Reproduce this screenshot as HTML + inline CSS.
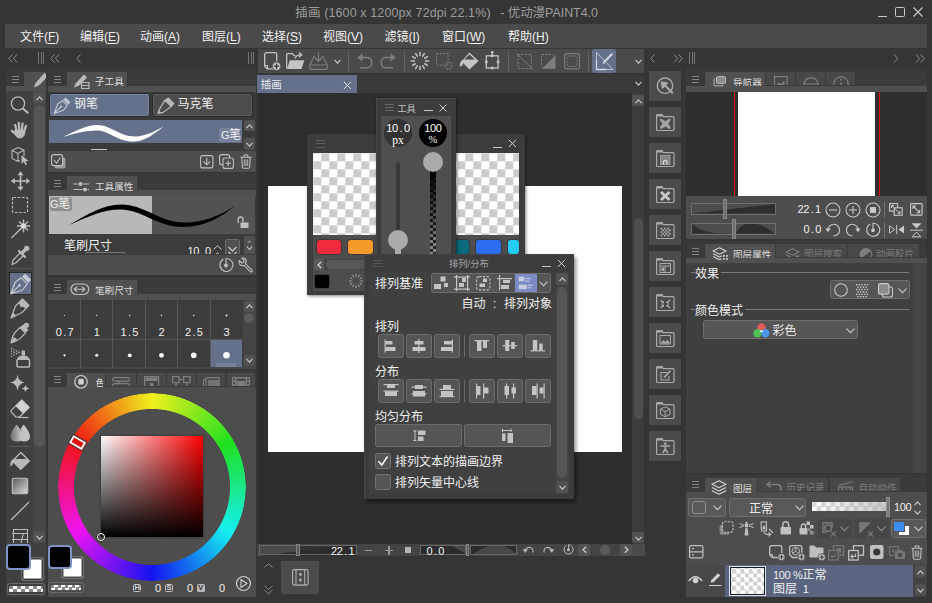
<!DOCTYPE html>
<html lang="zh-CN"><head><meta charset="utf-8"><title>插画 - 优动漫PAINT4.0</title>
<style>
html,body{margin:0;padding:0}
body{width:932px;height:603px;overflow:hidden;background:#353535;position:relative;font-family:"Liberation Sans","Noto Sans CJK SC",sans-serif;font-size:12px}
div,svg{position:absolute}
svg{overflow:visible}
.t{white-space:nowrap;line-height:1.15}
.m{font-family:"Liberation Sans","Noto Sans CJK SC",sans-serif;font-size:11px!important;letter-spacing:-0.350px}
.m i,i.m{font-style:normal;display:inline-block;width:6px;text-align:center}
.s{font-family:"Liberation Serif","Noto Serif CJK SC",serif}
u{text-decoration:underline;text-underline-offset:1.500px;text-decoration-thickness:1px}
</style></head>
<body>
<div class="t" style="left:295.3px;top:5.8px;font-size:12.5px;color:#9c9c9c;letter-spacing:0.120px;">插画 (1600 x 1200px 72dpi 22.1%)</div>
<div class="t" style="left:500.2px;top:5.8px;font-size:12.5px;color:#9c9c9c;letter-spacing:-0.050px;">- 优动漫PAINT4.0</div>
<div style="left:877.5px;top:16px;width:9.5px;height:1.2px;background:#c8c8c8;"></div>
<div style="left:895.3px;top:7.3px;width:9.7px;height:9.5px;border:1.200px solid #c8c8c8;box-sizing:border-box;border-radius:1.500px;"></div>
<svg style="left:912px;top:6px;" width="12" height="12" viewBox="0 0 12 12" fill="none" stroke="#b9b9b9" stroke-width="1"><path d="M1.5 1.5 L10.5 10.5 M10.5 1.5 L1.5 10.5" stroke="#c8c8c8" stroke-width="1.2"/></svg>
<div style="left:5px;top:24px;width:922px;height:24px;background:#4a4a4a;"></div>
<div class="t" style="left:20px;top:31px;font-size:12px;color:#f0f0f0;">文件(<u>F</u>)</div>
<div class="t" style="left:80px;top:31px;font-size:12px;color:#f0f0f0;">编辑(<u>E</u>)</div>
<div class="t" style="left:140px;top:31px;font-size:12px;color:#f0f0f0;">动画(<u>A</u>)</div>
<div class="t" style="left:202px;top:31px;font-size:12px;color:#f0f0f0;">图层(<u>L</u>)</div>
<div class="t" style="left:262px;top:31px;font-size:12px;color:#f0f0f0;">选择(<u>S</u>)</div>
<div class="t" style="left:323px;top:31px;font-size:12px;color:#f0f0f0;">视图(<u>V</u>)</div>
<div class="t" style="left:384.5px;top:31px;font-size:12px;color:#f0f0f0;">滤镜(<u>I</u>)</div>
<div class="t" style="left:442px;top:31px;font-size:12px;color:#f0f0f0;">窗口(<u>W</u>)</div>
<div class="t" style="left:508px;top:31px;font-size:12px;color:#f0f0f0;">帮助(<u>H</u>)</div>
<svg style="left:8px;top:54px;" width="10" height="9" viewBox="0 0 10 9" fill="none" stroke="#b9b9b9" stroke-width="1"><path d="M4.5 0.5 L0.8 4.5 L4.5 8.5 M9 0.5 L5.3 4.5 L9 8.5" stroke="#8a8a8a" stroke-width="1"/></svg>
<div style="left:38.0px;top:52px;width:1px;height:12px;background:#747474;"></div>
<div style="left:40.5px;top:52px;width:1px;height:12px;background:#747474;"></div>
<div style="left:43.0px;top:52px;width:1px;height:12px;background:#747474;"></div>
<svg style="left:50px;top:54px;" width="10" height="9" viewBox="0 0 10 9" fill="none" stroke="#b9b9b9" stroke-width="1"><path d="M4.5 0.5 L0.8 4.5 L4.5 8.5 M9 0.5 L5.3 4.5 L9 8.5" stroke="#8a8a8a" stroke-width="1"/></svg>
<svg style="left:76px;top:54px;" width="6" height="9" viewBox="0 0 6 9" fill="none" stroke="#b9b9b9" stroke-width="1"><path d="M4.5 0.5 L0.8 4.5 L4.5 8.5" stroke="#8a8a8a" stroke-width="1"/></svg>
<div style="left:248.0px;top:52px;width:1px;height:12px;background:#747474;"></div>
<div style="left:250.5px;top:52px;width:1px;height:12px;background:#747474;"></div>
<div style="left:253.0px;top:52px;width:1px;height:12px;background:#747474;"></div>
<svg style="left:650px;top:54px;" width="6" height="9" viewBox="0 0 6 9" fill="none" stroke="#b9b9b9" stroke-width="1"><path d="M4.5 0.5 L0.8 4.5 L4.5 8.5" stroke="#8a8a8a" stroke-width="1"/></svg>
<svg style="left:673px;top:54px;" width="10" height="9" viewBox="0 0 10 9" fill="none" stroke="#b9b9b9" stroke-width="1"><path d="M1 0.5 L4.7 4.5 L1 8.5 M5.5 0.5 L9.2 4.5 L5.5 8.5" stroke="#8a8a8a" stroke-width="1"/></svg>
<div style="left:689.0px;top:52px;width:1px;height:12px;background:#747474;"></div>
<div style="left:691.5px;top:52px;width:1px;height:12px;background:#747474;"></div>
<div style="left:694.0px;top:52px;width:1px;height:12px;background:#747474;"></div>
<svg style="left:893px;top:54px;" width="6" height="9" viewBox="0 0 6 9" fill="none" stroke="#b9b9b9" stroke-width="1"><path d="M1 0.5 L4.7 4.5 L1 8.5" stroke="#8a8a8a" stroke-width="1"/></svg>
<svg style="left:915px;top:54px;" width="10" height="9" viewBox="0 0 10 9" fill="none" stroke="#b9b9b9" stroke-width="1"><path d="M1 0.5 L4.7 4.5 L1 8.5 M5.5 0.5 L9.2 4.5 L5.5 8.5" stroke="#8a8a8a" stroke-width="1"/></svg>
<div style="left:6px;top:69px;width:40px;height:17px;background:#3a3a3a;"></div>
<div style="left:12px;top:75.5px;width:7px;height:1px;background:#828282;"></div>
<div style="left:12px;top:78.5px;width:7px;height:1px;background:#828282;"></div>
<div style="left:12px;top:81.5px;width:7px;height:1px;background:#828282;"></div>
<div style="left:24px;top:72px;width:22px;height:14px;background:#505050;"></div>
<div style="left:6px;top:86px;width:40px;height:5.5px;background:#505050;"></div>
<div style="left:6px;top:91px;width:40px;height:506px;background:#404040;"></div>
<div style="left:33px;top:91px;width:13px;height:506px;background:#464646;"></div>
<div style="left:33px;top:92px;width:12px;height:11px;background:#525252;border-radius:2px;"></div>
<svg style="left:35.5px;top:95.5px;" width="7" height="5" viewBox="0 0 7 5" fill="none" stroke="#b9b9b9" stroke-width="1"><path d="M0.500 4.200 L3.500 0.900 L6.500 4.200" stroke="#c8c8c8" stroke-width="1.150"/></svg>
<div style="left:34px;top:105px;width:11px;height:342px;background:#555;border-radius:5px;"></div>
<div style="left:33px;top:531px;width:12px;height:11px;background:#525252;border-radius:2px;"></div>
<svg style="left:35.5px;top:534.5px;" width="7" height="5" viewBox="0 0 7 5" fill="none" stroke="#b9b9b9" stroke-width="1"><path d="M0.500 0.800 L3.500 4.100 L6.500 0.800" stroke="#c8c8c8" stroke-width="1.150"/></svg>
<div style="left:8.5px;top:271.5px;width:23px;height:23.5px;background:#65708a;border:1px solid #2a2a2a;box-sizing:border-box;"></div>
<svg style="left:8px;top:92px;" width="24" height="24" viewBox="0 0 24 24" fill="none" stroke="#b9b9b9" stroke-width="1"><circle cx="10" cy="11.5" r="6.6" stroke="#b9b9b9" stroke-width="1.3"/><path d="M14.8 16.4 L20.3 21.3" stroke="#b9b9b9" stroke-width="2"/></svg>
<svg style="left:8px;top:118px;" width="24" height="24" viewBox="0 0 24 24" fill="none" stroke="#b9b9b9" stroke-width="1"><g stroke="#b9b9b9" stroke-width="2.3" stroke-linecap="round"><path d="M8.6 13 L7.2 7"/><path d="M11.2 12 L10.8 5"/><path d="M13.8 12 L14.6 5.4"/><path d="M16 13.5 L18 8"/><path d="M7.5 16 L4 12.8"/></g><path d="M6.5 12 L17.5 12 L17 16.5 Q15 20.5 11.5 20.5 Q8 20 6 15 Z" fill="#b9b9b9" stroke="none"/></svg>
<svg style="left:8px;top:143px;" width="24" height="24" viewBox="0 0 24 24" fill="none" stroke="#b9b9b9" stroke-width="1"><path d="M10 4.5 L16 7 L16 13 M10 4.5 L4 7.5 L4 15.5 L10 18.5 L12 17.5 M4 7.5 L10 10.5 L16 7 M10 10.5 L10 18.5" stroke="#b9b9b9" stroke-width="1.1"/><path d="M13.5 12 L13.5 21 L15.8 18.8 L17.5 22.3 L19 21.5 L17.4 18.2 L20.5 18 Z" fill="#b9b9b9" stroke="none"/></svg>
<svg style="left:8px;top:168.5px;" width="24" height="24" viewBox="0 0 24 24" fill="none" stroke="#b9b9b9" stroke-width="1"><path d="M12.5 5 L12.5 19 M5.5 12 L19.5 12" stroke="#b9b9b9" stroke-width="1.6"/><path d="M12.5 2.3 L15.6 6.3 L9.4 6.3 Z M12.5 21.7 L15.6 17.7 L9.4 17.7 Z M2.8 12 L6.8 8.9 L6.8 15.1 Z M22.2 12 L18.2 8.9 L18.2 15.1 Z" fill="#b9b9b9" stroke="none"/></svg>
<svg style="left:8px;top:193px;" width="24" height="24" viewBox="0 0 24 24" fill="none" stroke="#b9b9b9" stroke-width="1"><rect x="4.5" y="4.5" width="15" height="15" rx="1" stroke="#b9b9b9" stroke-width="1.2" stroke-dasharray="2.6 1.6"/></svg>
<svg style="left:8px;top:217px;" width="24" height="24" viewBox="0 0 24 24" fill="none" stroke="#b9b9b9" stroke-width="1"><path d="M3.5 21 L13 11.5" stroke="#b9b9b9" stroke-width="1.3"/><g stroke="#b9b9b9" stroke-width="1.5"><path d="M15.5 2.5 L15.5 15.5"/><path d="M9 9 L22 9"/><path d="M11 4.5 L20 13.5"/><path d="M20 4.5 L11 13.5"/></g><circle cx="15.5" cy="9" r="2.6" fill="#d8d8d8" stroke="none"/></svg>
<svg style="left:8px;top:243px;" width="24" height="24" viewBox="0 0 24 24" fill="none" stroke="#b9b9b9" stroke-width="1"><path d="M4 21.5 L5.2 17 L12.5 9.5 L15.5 12.5 L8 19.8 Z" stroke="#b9b9b9" stroke-width="1.2" stroke-linejoin="round"/><path d="M11 8 L17 14" stroke="#b9b9b9" stroke-width="2.2" stroke-linecap="round"/><path d="M14.5 9.5 L18.5 5.5" stroke="#b9b9b9" stroke-width="3.6" stroke-linecap="round"/><circle cx="18.7" cy="5.3" r="2.6" fill="#b9b9b9" stroke="none"/></svg>
<svg style="left:8px;top:271.5px;" width="24" height="24" viewBox="0 0 24 24" fill="none" stroke="#b9b9b9" stroke-width="1"><path d="M2.8 22 L7 10.5 L13.2 5.8 L19.2 11.8 L14.5 18 Z M2.8 22 L11 13.8" stroke="#c6c9d2" stroke-width="1.2" stroke-linejoin="round"/><path d="M14 4.5 L17.2 1.8 L23.2 7.8 L20.5 11 Z" fill="#c6c9d2" stroke="none"/><circle cx="11.5" cy="13.3" r="1.3" fill="#c6c9d2" stroke="none"/></svg>
<svg style="left:8px;top:296px;" width="24" height="24" viewBox="0 0 24 24" fill="none" stroke="#b9b9b9" stroke-width="1"><path d="M3 22 L7.5 10 L14.5 3 L21 9.5 L14 16.5 Z" stroke="#b9b9b9" stroke-width="1.2" stroke-linejoin="round"/><path d="M14.5 3 L21 9.5 L17.5 13 Q15 9.5 12.5 11.5 Q12.5 8 9.8 7.7 Z" fill="#b9b9b9" stroke="none"/><path d="M3 22 L5 16.5 L8.5 20 Z" fill="#b9b9b9" stroke="none"/></svg>
<svg style="left:8px;top:321px;" width="24" height="24" viewBox="0 0 24 24" fill="none" stroke="#b9b9b9" stroke-width="1"><path d="M3 22 Q4.5 13 9.5 9 L12 6.5 L17.5 12 L15 14.5 Q11.5 19.5 3 22 Z" stroke="#b9b9b9" stroke-width="1.2" stroke-linejoin="round"/><path d="M12.2 6.3 L15 3.5 L20.5 9 L17.7 11.8 Z" fill="#b9b9b9" stroke="none"/><circle cx="18.3" cy="4.3" r="2.6" fill="#b9b9b9" stroke="none"/><path d="M3 22 Q7 21 9.5 18.5 L6 16 Q4 18.5 3 22Z" fill="#b9b9b9" stroke="none"/></svg>
<svg style="left:8px;top:346px;" width="24" height="24" viewBox="0 0 24 24" fill="none" stroke="#b9b9b9" stroke-width="1"><rect x="9" y="13.2" width="12.5" height="7.8" rx="1.2" stroke="#b9b9b9" stroke-width="1.5"/><path d="M9.3 13 Q10 9.5 15.2 9.5 Q20.5 9.500 21.200 13 Z" fill="#b9b9b9" stroke="none"/><rect x="13.6" y="4.5" width="3.4" height="5" rx="0.6" fill="#b9b9b9" stroke="none"/><g fill="#b9b9b9" stroke="none"><circle cx="11" cy="6.300" r="0.9"/><circle cx="8.500" cy="5" r="0.8"/><circle cx="8.500" cy="7.600" r="0.8"/><circle cx="6" cy="3.700" r="0.75"/><circle cx="6" cy="6.300" r="0.75"/><circle cx="6" cy="8.900" r="0.75"/><circle cx="3.6" cy="2.500" r="0.7"/><circle cx="3.6" cy="5" r="0.7"/><circle cx="3.6" cy="7.600" r="0.7"/><circle cx="3.6" cy="10.2" r="0.7"/></g></svg>
<svg style="left:8px;top:371px;" width="24" height="24" viewBox="0 0 24 24" fill="none" stroke="#b9b9b9" stroke-width="1"><path d="M9.5 3.5 Q10.3 10.700 17 11.500 Q10.3 12.3 9.5 19.500 Q8.700 12.3 2 11.500 Q8.700 10.700 9.5 3.5 Z" fill="#b9b9b9" stroke="none"/><path d="M17.500 13.500 Q17.900 17.100 21.500 17.500 Q17.900 17.900 17.500 21.500 Q17.100 17.900 13.500 17.500 Q17.100 17.100 17.500 13.500 Z" fill="#b9b9b9" stroke="none"/></svg>
<svg style="left:8px;top:397px;" width="24" height="24" viewBox="0 0 24 24" fill="none" stroke="#b9b9b9" stroke-width="1"><path d="M13.8 2.8 L21.3 10.300 L11.500 20 L8 20 L3.2 15.200 L3.2 13.400 Z" stroke="#b9b9b9" stroke-width="1.200" stroke-linejoin="round"/><path d="M13.8 2.8 L21.3 10.300 L15 16.500 L7.500 9 Z" fill="#d0d0d0" stroke="none"/><path d="M10 20.500 L20.500 20.500" stroke="#b9b9b9" stroke-width="1.2"/></svg>
<svg style="left:8px;top:421px;" width="24" height="24" viewBox="0 0 24 24" fill="none" stroke="#b9b9b9" stroke-width="1"><defs><linearGradient id="bl" x1="0" x2="1"><stop offset="0" stop-color="#6e6e6e"/><stop offset="1" stop-color="#d0d0d0"/></linearGradient></defs><path d="M8.500 3.500 Q15 11 15 15.500 Q15 20.5 8.8 20.5 Q2.500 20.500 2.500 15.5 Q2.500 11 8.500 3.500 Z" fill="url(#bl)" stroke="none"/><path d="M15.700 3.500 Q22 11 22 15.500 Q22 20.5 15.800 20.5 Q12.5 20.500 11.500 18 Q15 12 12.600 8 Q14 5.500 15.700 3.500 Z" fill="#c4c4c4" stroke="none"/></svg>
<svg style="left:8px;top:449px;" width="24" height="24" viewBox="0 0 24 24" fill="none" stroke="#b9b9b9" stroke-width="1"><path d="M12.800 2.500 L22.300 12 L12.800 21.300 L3.500 12 Z" fill="#b9b9b9" stroke="none"/><path d="M12.800 4.500 L18.300 10 L7.300 10 Z" fill="#404040" stroke="none"/><path d="M5.500 10 Q2 11.500 2.300 17 Q4.500 17.500 5 14 Z" fill="#b9b9b9" stroke="none"/></svg>
<svg style="left:8px;top:474px;" width="24" height="24" viewBox="0 0 24 24" fill="none" stroke="#b9b9b9" stroke-width="1"><defs><linearGradient id="gr" x1="0" y1="0" x2="1" y2="1"><stop offset="0" stop-color="#5c5c5c"/><stop offset="1" stop-color="#d8d8d8"/></linearGradient></defs><rect x="4.300" y="4.300" width="15.400" height="15.400" rx="1.500" fill="url(#gr)" stroke="#c0c0c0" stroke-width="1.100"/></svg>
<svg style="left:8px;top:499px;" width="24" height="24" viewBox="0 0 24 24" fill="none" stroke="#b9b9b9" stroke-width="1"><path d="M3 21 L21 3" stroke="#b9b9b9" stroke-width="1.300"/></svg>
<div style="left:12px;top:528px;width:17px;height:15px;overflow:hidden;"><div style="left:0.5px;top:0.5px;width:15px;height:20px;border:1.2px solid #b9b9b9;box-sizing:border-box"></div><div style="left:0;top:5px;width:16px;height:1.2px;background:#b9b9b9"></div><div style="left:0;top:10.5px;width:16px;height:1.2px;background:#b9b9b9"></div><div style="left:9px;top:5px;width:1.2px;height:16px;background:#b9b9b9;transform:rotate(14deg)"></div></div>
<div style="left:10px;top:268px;width:21px;height:1px;background:#5a5a5a;"></div>
<div style="left:10px;top:446px;width:21px;height:1px;background:#5a5a5a;"></div>
<div style="left:6px;top:543px;width:40px;height:54px;background:#404040;"></div>
<div style="left:21px;top:557px;width:23px;height:24px;background:#fff;border:1px solid #6a6a6a;box-sizing:border-box;border-radius:3px;box-shadow:inset 0 0 0 1.5px #404040;"></div>
<div style="left:6px;top:544px;width:25px;height:26px;background:#000;border:2px solid #7e92c6;box-sizing:border-box;border-radius:4px;"></div>
<div style="left:7px;top:583px;width:38px;height:12px;background:#404040;border:1px solid #6a6a6a;box-sizing:border-box;border-radius:3px;"></div>
<div style="left:9px;top:586px;width:34px;height:6px;background:repeating-conic-gradient(#fff 0 25%,#888 0 50%) 0 0/8px 6px;border-radius:1px;"></div>
<div style="left:48px;top:69px;width:208px;height:17px;background:#3a3a3a;"></div>
<div style="left:54px;top:75.5px;width:7px;height:1px;background:#828282;"></div>
<div style="left:54px;top:78.5px;width:7px;height:1px;background:#828282;"></div>
<div style="left:54px;top:81.5px;width:7px;height:1px;background:#828282;"></div>
<div style="left:67px;top:72px;width:60px;height:14px;background:#505050;"></div>
<div style="left:48px;top:86px;width:208px;height:5.5px;background:#505050;"></div>
<div class="t" style="left:95px;top:76px;font-size:9.6px;color:#dcdcdc;height:10.5px;overflow:hidden;">子工具</div>
<svg style="left:33px;top:72px;overflow:hidden;" width="13" height="16" viewBox="0 0 13 16" fill="none" stroke="#b9b9b9" stroke-width="1"><path d="M1 15.5 L2.5 11 L11.5 1 L15 4 L6 13.5 Z" fill="#b9b9b9" stroke="none"/></svg>
<svg style="left:73px;top:73px;" width="18" height="16" viewBox="0 0 18 16" fill="none" stroke="#b9b9b9" stroke-width="1"><path d="M1 14.5 L2.5 10.5 L11 1.5 L14 4.5 L5.5 13 Z" fill="#b9b9b9" stroke="none"/><path d="M8.5 9.5 L16 9.500 L16 15.5 L8.5 15.500 Z M8.500 12.500 L16 12.500" stroke="#b9b9b9" stroke-width="1.2"/></svg>
<div style="left:48px;top:91.5px;width:208px;height:60px;background:#3a3a3a;"></div>
<div style="left:49px;top:92.5px;width:101.3px;height:24px;background:#65708a;border:1px solid #2a2a2a;box-sizing:border-box;border-radius:3px;box-shadow:inset 0 0 0 1px #7781a0;"></div>
<div style="left:152.3px;top:92.5px;width:101.2px;height:24px;background:#4c4c4c;border:1px solid #2a2a2a;box-sizing:border-box;border-radius:3px;box-shadow:inset 0 0 0 1px #5c5c5c;"></div>
<svg style="left:51.7px;top:95.5px;" width="19" height="19" viewBox="0 0 24 24" fill="none" stroke="#b9b9b9" stroke-width="1"><path d="M2.8 22 L7 10.5 L13.2 5.8 L19.2 11.8 L14.5 18 Z M2.8 22 L11 13.8" stroke="#c6c9d2" stroke-width="1.4" stroke-linejoin="round"/><path d="M14 4.5 L17.2 1.8 L23.2 7.8 L20.5 11 Z" fill="#c6c9d2" stroke="none"/><circle cx="11.5" cy="13.3" r="1.4" fill="#c6c9d2" stroke="none"/></svg>
<svg style="left:155.5px;top:95.5px;" width="19" height="19" viewBox="0 0 24 24" fill="none" stroke="#b9b9b9" stroke-width="1"><path d="M2.5 22 L4 17.5 L11 5.5 L19.5 13 L8.5 21 Z" stroke="#b9b9b9" stroke-width="1.5" stroke-linejoin="round"/><path d="M10.5 5.5 L15.5 1.5 L23.5 9.5 L19.5 14 Z" fill="#b9b9b9" stroke="none"/><path d="M2.2 22.3 L3.5 18 L7 21 Z" fill="#b9b9b9" stroke="none"/></svg>
<div class="t" style="left:74px;top:97.5px;font-size:12px;color:#f0f0f0;">钢笔</div>
<div class="t" style="left:177.5px;top:97.5px;font-size:12px;color:#f0f0f0;">马克笔</div>
<div style="left:49px;top:119.5px;width:193px;height:23.5px;background:#65708a;"></div>
<svg style="left:49px;top:119.5px;" width="193" height="23.5" viewBox="0 0 193 23.5" fill="none" stroke="#b9b9b9" stroke-width="1"><path d="M14 17 C 28 10, 38 5, 48 5 C 62 5, 70 16.500, 86 16.500 C 96 16.500, 106 11, 114.500 6.500 C 106 13.500, 96 21.500, 84 21.500 C 68 21.500, 60 10.500, 48 10.500 C 40 10.500, 28 12.500, 14 17 Z" fill="#fff" stroke="none"/></svg>
<div style="left:218.5px;top:127.5px;width:21.5px;height:14px;background:#77819a;border-radius:2px;"></div>
<div class="t" style="left:221px;top:128.500px;font-size:12px;color:#f0f0f0"><span class="m">G</span>笔</div>
<div style="left:243.5px;top:120px;width:11px;height:11px;background:#525252;border-radius:2px;"></div>
<svg style="left:246.0px;top:123.5px;" width="7" height="5" viewBox="0 0 7 5" fill="none" stroke="#b9b9b9" stroke-width="1"><path d="M0.500 4.200 L3.500 0.900 L6.500 4.200" stroke="#c8c8c8" stroke-width="1.150"/></svg>
<div style="left:243.5px;top:138px;width:11px;height:12px;background:#525252;border-radius:2px;"></div>
<svg style="left:246.0px;top:141.5px;" width="7" height="5" viewBox="0 0 7 5" fill="none" stroke="#b9b9b9" stroke-width="1"><path d="M0.500 0.800 L3.500 4.100 L6.500 0.800" stroke="#c8c8c8" stroke-width="1.150"/></svg>
<div style="left:91px;top:148.5px;width:16px;height:1px;background:#c8c8c8;"></div>
<div style="left:48px;top:151px;width:208px;height:20.5px;background:#4d4d4d;"></div>
<svg style="left:51px;top:154px;" width="15" height="15" viewBox="0 0 15 15" fill="none" stroke="#b9b9b9" stroke-width="1"><rect x="3.5" y="3.500" width="11" height="11" rx="2" fill="#9a9a9a" stroke="none"/><rect x="0.600" y="0.600" width="11" height="11" rx="2" fill="#4d4d4d" stroke="#c0c0c0" stroke-width="1.100"/><path d="M3 6 L5.500 9 L9.500 3.500" stroke="#c0c0c0" stroke-width="1.100"/></svg>
<svg style="left:200px;top:155px;" width="14" height="14" viewBox="0 0 14 14" fill="none" stroke="#b9b9b9" stroke-width="1"><rect x="0.600" y="0.600" width="12.300" height="12.300" rx="2" stroke="#c0c0c0" stroke-width="1.100"/><path d="M6.750 2.500 L6.750 9.5 M3.500 6.500 L6.750 9.800 L10 6.500" stroke="#c0c0c0" stroke-width="1.100"/></svg>
<svg style="left:219px;top:154px;" width="15" height="15" viewBox="0 0 15 15" fill="none" stroke="#b9b9b9" stroke-width="1"><rect x="0.600" y="0.600" width="10" height="10" rx="2" stroke="#c0c0c0" stroke-width="1.100"/><rect x="4" y="4" width="10.400" height="10.400" rx="2" fill="#4d4d4d" stroke="#c0c0c0" stroke-width="1.100"/><path d="M9.200 6.500 L9.200 12 M6.500 9.200 L12 9.200" stroke="#c0c0c0" stroke-width="1.100"/></svg>
<svg style="left:240px;top:154px;" width="12" height="15" viewBox="0 0 12 15" fill="none" stroke="#b9b9b9" stroke-width="1"><path d="M0.500 3.200 L11.500 3.200 M4 3 L4.300 1 L7.700 1 L8 3" stroke="#c0c0c0" stroke-width="1.100"/><path d="M1.800 3.500 L2.300 13 Q2.400 14.300 3.700 14.300 L8.300 14.300 Q9.600 14.300 9.700 13 L10.200 3.500" stroke="#c0c0c0" stroke-width="1.100"/><path d="M4.300 5.500 L4.300 12 M6 5.500 L6 12 M7.700 5.500 L7.700 12" stroke="#c0c0c0" stroke-width="0.900"/></svg>
<div style="left:48px;top:173px;width:208px;height:17px;background:#3a3a3a;"></div>
<div style="left:54px;top:179.5px;width:7px;height:1px;background:#828282;"></div>
<div style="left:54px;top:182.5px;width:7px;height:1px;background:#828282;"></div>
<div style="left:54px;top:185.5px;width:7px;height:1px;background:#828282;"></div>
<div style="left:67px;top:176px;width:70px;height:14px;background:#505050;"></div>
<div style="left:48px;top:190px;width:208px;height:5.5px;background:#505050;"></div>
<div class="t" style="left:95px;top:180.5px;font-size:9.6px;color:#dcdcdc;height:10.5px;overflow:hidden;">工具属性</div>
<svg style="left:73px;top:181px;" width="17" height="11" viewBox="0 0 17 11" fill="none" stroke="#b9b9b9" stroke-width="1"><path d="M0.500 3 L5 3 M10 3 L16 3 M0.500 8.500 L9.500 8.500 M14.500 8.500 L16 8.500" stroke="#c0c0c0" stroke-width="1.200"/><circle cx="7.500" cy="3" r="2" fill="#c0c0c0" stroke="none"/><circle cx="12" cy="8.500" r="2" fill="#c0c0c0" stroke="none"/></svg>
<div style="left:48px;top:195.5px;width:208px;height:59px;background:#3c3c3c;"></div>
<div style="left:49px;top:196px;width:102.5px;height:38px;background:#b8b8b8;"></div>
<div style="left:151.5px;top:196px;width:103.5px;height:38px;background:#525252;"></div>
<svg style="left:49px;top:196px;" width="206" height="38" viewBox="0 0 206 38" fill="none" stroke="#b9b9b9" stroke-width="1"><path d="M20 29 C 38 19, 54 8.500, 72 8.500 C 96 8.500, 110 26.500, 136 26.500 C 154 26.500, 172 19, 186 10 C 172 21, 156 31, 134 31 C 108 31, 94 14, 72 13.500 C 56 13, 38 21, 20 29 Z" fill="#000" stroke="none"/></svg>
<div style="left:49.5px;top:197px;width:22px;height:13.5px;background:#8f8f8f;border-radius:2px;"></div>
<div class="t" style="left:50px;top:198px;font-size:12px;color:#f0f0f0"><span class="m">G</span>笔</div>
<svg style="left:237px;top:216px;" width="12" height="13" viewBox="0 0 12 13" fill="none" stroke="#b9b9b9" stroke-width="1"><path d="M1.200 7 L1.200 3.800 Q1.200 1 3.700 1 Q6 1 6 3.800 L6 6.500" stroke="#c0c0c0" stroke-width="1.300"/><rect x="3.500" y="6.500" width="8" height="5.500" rx="0.800" fill="#c0c0c0" stroke="none"/></svg>
<div style="left:48px;top:234.5px;width:208px;height:19.7px;overflow:hidden;"><div class="t" style="left:16px;top:5.300px;font-size:12px;color:#f0f0f0">笔刷尺寸</div><div class="t m" style="left:139.500px;top:10.300px;font-size:12px;color:#f0f0f0">10<i>.</i>0</div><div style="left:37px;top:17.500px;width:39px;height:4px;border:1px solid #777;border-radius:2px"></div><div style="left:177px;top:4px;width:15px;height:18px;background:#505050;border:1px solid #6a6a6a;box-sizing:border-box;border-radius:2px"></div><div style="left:195.500px;top:1.500px;width:11px;height:20px;background:#505050;border-radius:2px"></div><svg style="left:165px;top:10px" width="9" height="12" viewBox="0 0 9 12" fill="none"><path d="M0.500 4.500 L4.500 0.800 L8.500 4.500 M0.500 11.500 L4.500 7.800 L8.500 11.500" stroke="#d0d0d0" stroke-width="1"/></svg><svg style="left:180px;top:11px" width="9" height="12" viewBox="0 0 9 12" fill="none"><path d="M0.500 1 L4.500 5 L8.500 1 M0.500 6 L4.500 10 L8.500 6" stroke="#d0d0d0" stroke-width="1.100"/></svg><svg style="left:197.500px;top:5px" width="7" height="12" viewBox="0 0 7 12" fill="none"><path d="M2.300 2.200 L3.500 1 L4.700 2.200" stroke="#d0d0d0" stroke-width="1"/><path d="M0.800 6.500 L3.500 9.500 L6.200 6.500" stroke="#d0d0d0" stroke-width="1.100"/></svg></div>
<div style="left:48px;top:254.5px;width:208px;height:20.8px;background:#4d4d4d;"></div>
<svg style="left:218px;top:257px;" width="16" height="16" viewBox="0 0 16 16" fill="none" stroke="#b9b9b9" stroke-width="1"><path d="M5.300 2.300 A6.500 6.500 0 1 0 8 1.500" stroke="#c0c0c0" stroke-width="1.100"/><path d="M8 1.200 L8 8" stroke="#c0c0c0" stroke-width="1.100"/><circle cx="8" cy="8.500" r="1.900" fill="#c0c0c0" stroke="none"/><path d="M2.500 4.500 L3.500 3.500" stroke="#c0c0c0" stroke-width="1" stroke-dasharray="1 1"/></svg>
<svg style="left:238px;top:257px;" width="16" height="16" viewBox="0 0 16 16" fill="none" stroke="#b9b9b9" stroke-width="1"><path d="M7.500 6.800 L14 13.200 Q14.800 14.800 13.200 15 L12.500 14.800 L6 8.300 Q3 9.300 1.500 7 Q0.500 5.300 1.300 3.500 L3.800 6 L5.800 5.500 L6.200 3.500 L3.800 1.200 Q6 0.500 7.500 2 Q9 4 7.500 6.800 Z" stroke="#c0c0c0" stroke-width="1.100" stroke-linejoin="round"/></svg>
<div style="left:48px;top:277px;width:208px;height:17px;background:#3a3a3a;"></div>
<div style="left:54px;top:283.5px;width:7px;height:1px;background:#828282;"></div>
<div style="left:54px;top:286.5px;width:7px;height:1px;background:#828282;"></div>
<div style="left:54px;top:289.5px;width:7px;height:1px;background:#828282;"></div>
<div style="left:67px;top:280px;width:70px;height:14px;background:#505050;"></div>
<div style="left:48px;top:294px;width:208px;height:5.5px;background:#505050;"></div>
<div class="t" style="left:95px;top:284.5px;font-size:9.6px;color:#dcdcdc;height:10.5px;overflow:hidden;">笔刷尺寸</div>
<svg style="left:70px;top:283px;height:12.5px;overflow:hidden;" width="20" height="13" viewBox="0 0 20 13" fill="none" stroke="#b9b9b9" stroke-width="1"><rect x="0.600" y="1" width="18.500" height="11" rx="5.500" stroke="#c0c0c0" stroke-width="1.200"/><path d="M4 6.500 L15 6.500 M7 3.800 L4 6.500 L7 9.200 M12 3.800 L15 6.500 L12 9.200" stroke="#c0c0c0" stroke-width="1.200"/></svg>
<div style="left:48px;top:299.5px;width:208px;height:67px;background:#3c3c3c;"></div>
<div style="left:48px;top:366.5px;width:208px;height:2px;background:#484848;"></div>
<div style="left:243px;top:299.5px;width:13px;height:67px;background:#454545;"></div>
<div style="left:49px;top:338.5px;width:193px;height:1.2px;background:#565656;"></div>
<svg style="left:49px;top:300px;" width="32" height="66" viewBox="0 0 32 66" fill="none" stroke="#b9b9b9" stroke-width="1"><circle cx="15.5" cy="15.5" r="0.6" fill="#e8e8e8" stroke="none"/><circle cx="15.5" cy="55.3" r="1.1" fill="#fff" stroke="none"/></svg>
<div class="t m" style="left:49px;top:325.5px;width:31px;text-align:center;font-size:12px;color:#f0f0f0">0<i>.</i>7</div>
<div style="left:79.5px;top:300px;width:1.2px;height:66.5px;background:#565656;"></div>
<svg style="left:81px;top:300px;" width="32" height="66" viewBox="0 0 32 66" fill="none" stroke="#b9b9b9" stroke-width="1"><circle cx="15.75" cy="15.5" r="0.65" fill="#e8e8e8" stroke="none"/><circle cx="15.75" cy="55.3" r="1.5" fill="#fff" stroke="none"/></svg>
<div class="t m" style="left:81px;top:325.5px;width:31.5px;text-align:center;font-size:12px;color:#f0f0f0">1</div>
<div style="left:112.0px;top:300px;width:1.2px;height:66.5px;background:#565656;"></div>
<svg style="left:113.5px;top:300px;" width="32" height="66" viewBox="0 0 32 66" fill="none" stroke="#b9b9b9" stroke-width="1"><circle cx="15.75" cy="15.5" r="0.7" fill="#e8e8e8" stroke="none"/><circle cx="15.75" cy="55.3" r="1.9" fill="#fff" stroke="none"/></svg>
<div class="t m" style="left:113.5px;top:325.5px;width:31.5px;text-align:center;font-size:12px;color:#f0f0f0">1<i>.</i>5</div>
<div style="left:144.5px;top:300px;width:1.2px;height:66.5px;background:#565656;"></div>
<svg style="left:146px;top:300px;" width="32" height="66" viewBox="0 0 32 66" fill="none" stroke="#b9b9b9" stroke-width="1"><circle cx="15.5" cy="15.5" r="0.75" fill="#e8e8e8" stroke="none"/><circle cx="15.5" cy="55.3" r="2.4" fill="#fff" stroke="none"/></svg>
<div class="t m" style="left:146px;top:325.5px;width:31px;text-align:center;font-size:12px;color:#f0f0f0">2</div>
<div style="left:176.5px;top:300px;width:1.2px;height:66.5px;background:#565656;"></div>
<svg style="left:178px;top:300px;" width="32" height="66" viewBox="0 0 32 66" fill="none" stroke="#b9b9b9" stroke-width="1"><circle cx="15.75" cy="15.5" r="0.8" fill="#e8e8e8" stroke="none"/><circle cx="15.75" cy="55.3" r="2.8" fill="#fff" stroke="none"/></svg>
<div class="t m" style="left:178px;top:325.5px;width:31.5px;text-align:center;font-size:12px;color:#f0f0f0">2<i>.</i>5</div>
<div style="left:211px;top:340px;width:31px;height:26.5px;background:#65708a;"></div>
<div style="left:209.5px;top:300px;width:1.2px;height:66.5px;background:#565656;"></div>
<svg style="left:211px;top:300px;" width="32" height="66" viewBox="0 0 32 66" fill="none" stroke="#b9b9b9" stroke-width="1"><circle cx="15.5" cy="15.5" r="1.0" fill="#e8e8e8" stroke="none"/><circle cx="15.5" cy="55.3" r="3.3" fill="#fff" stroke="none"/></svg>
<div class="t m" style="left:211px;top:325.5px;width:31px;text-align:center;font-size:12px;color:#f0f0f0">3</div>
<div style="left:216px;top:363px;width:20px;height:3.5px;background:#77819a;border-radius:2px 2px 0 0;"></div>
<div style="left:243.5px;top:300.5px;width:11px;height:11px;background:#525252;border-radius:2px;"></div>
<svg style="left:246.0px;top:304.0px;" width="7" height="5" viewBox="0 0 7 5" fill="none" stroke="#b9b9b9" stroke-width="1"><path d="M0.500 4.200 L3.500 0.900 L6.500 4.200" stroke="#c8c8c8" stroke-width="1.150"/></svg>
<div style="left:243.5px;top:354.5px;width:11px;height:11px;background:#525252;border-radius:2px;"></div>
<svg style="left:246.0px;top:358.0px;" width="7" height="5" viewBox="0 0 7 5" fill="none" stroke="#b9b9b9" stroke-width="1"><path d="M0.500 0.800 L3.500 4.100 L6.500 0.800" stroke="#c8c8c8" stroke-width="1.150"/></svg>
<div style="left:244px;top:313px;width:10px;height:10px;background:#5a5a5a;border-radius:50%;"></div>
<div style="left:48px;top:369.5px;width:208px;height:17px;background:#3a3a3a;"></div>
<div style="left:54px;top:376.0px;width:7px;height:1px;background:#828282;"></div>
<div style="left:54px;top:379.0px;width:7px;height:1px;background:#828282;"></div>
<div style="left:54px;top:382.0px;width:7px;height:1px;background:#828282;"></div>
<div style="left:67px;top:372.5px;width:38px;height:14px;background:#505050;"></div>
<div style="left:106px;top:372.5px;width:29.5px;height:13px;background:#484848;"></div>
<div style="left:136.5px;top:372.5px;width:29.0px;height:13px;background:#484848;"></div>
<div style="left:167px;top:372.5px;width:28.5px;height:13px;background:#484848;"></div>
<div style="left:197px;top:372.5px;width:28px;height:13px;background:#484848;"></div>
<div style="left:226.5px;top:372.5px;width:28.5px;height:13px;background:#484848;"></div>
<div style="left:48px;top:386.5px;width:208px;height:210px;background:#4d4d4d;"></div>
<div class="t" style="left:95.5px;top:377px;font-size:9.6px;color:#dcdcdc;height:10.5px;overflow:hidden;width:7.5px;">色</div>
<svg style="left:73px;top:374px;" width="16" height="16" viewBox="0 0 16 16" fill="none" stroke="#b9b9b9" stroke-width="1"><circle cx="8" cy="7.800" r="6.300" stroke="#d0d0d0" stroke-width="1.200"/><rect x="5.300" y="5.100" width="5.400" height="5.400" rx="0.800" fill="#d0d0d0" stroke="none"/></svg>
<div style="left:106px;top:372.5px;width:150px;height:13px;overflow:hidden;"><svg style="left:6px;top:4px" width="20" height="12" viewBox="0 0 20 12" fill="none" stroke="#7e7e7e" stroke-width="1.200"><rect x="0.600" y="0.600" width="17" height="3.500" rx="1.700"/><rect x="0.600" y="6.600" width="17" height="3.500" rx="1.700"/><path d="M5 5.500 L7 3 L9 5.500Z M5 11.500 L7 9 L9 11.500Z" fill="#7e7e7e" stroke="none"/></svg><svg style="left:38px;top:3.500px" width="16" height="14" viewBox="0 0 16 14" fill="none" stroke="#7e7e7e" stroke-width="1.200"><rect x="0.600" y="0.600" width="14" height="13"/><rect x="1.500" y="1.500" width="12" height="3.500" fill="#7e7e7e" stroke="none"/><rect x="6" y="7" width="3.500" height="3.500" fill="#7e7e7e" stroke="none"/></svg><svg style="left:66px;top:3.500px" width="20" height="14" viewBox="0 0 20 14" fill="none" stroke="#7e7e7e" stroke-width="1.200"><rect x="0.600" y="0.600" width="6.500" height="6"/><rect x="11.600" y="0.600" width="6.500" height="6"/><path d="M7 3.500 L11.500 3.500 M4 6.500 L4 12 M15 6.500 L15 12 M1.500 11.500 L6.500 11.500 M12.500 11.500 L17.500 11.500"/></svg><svg style="left:97px;top:4.500px" width="18" height="12" viewBox="0 0 18 12" fill="none" stroke="#7e7e7e" stroke-width="1.200"><path d="M0.600 12 L0.600 3.500 Q0.600 2.500 1.600 2.500 L3 2.500 M3 12 L3 1.600 Q3 0.600 4 0.600 L16 0.600 L16 12"/><rect x="5" y="3" width="11" height="9" fill="#7e7e7e" stroke="none" opacity="0.8"/></svg><svg style="left:126px;top:4px" width="18" height="12" viewBox="0 0 18 12" fill="#7e7e7e" stroke="none"><rect x="0" y="0" width="18" height="12" rx="1"/><rect x="4.500" y="1.500" width="9" height="9" fill="#484848"/><rect x="5" y="4" width="8" height="5" fill="#7e7e7e"/><g fill="#484848"><rect x="1" y="1.500" width="2" height="2"/><rect x="1" y="5" width="2" height="2"/><rect x="1" y="8.500" width="2" height="2"/><rect x="15" y="1.500" width="2" height="2"/><rect x="15" y="5" width="2" height="2"/><rect x="15" y="8.500" width="2" height="2"/></g></svg></div>
<div style="left:58px;top:392.5px;width:188px;height:188px;border-radius:50%;background:conic-gradient(#f0f01c,#1fe01f 60deg,#14f0f0 120deg,#1414f0 180deg,#f014f0 240deg,#f01414 300deg,#f0f01c 360deg);-webkit-mask:radial-gradient(circle,transparent 77.600px,#000 78.400px,#000 93.5px,transparent 94.3px);mask:radial-gradient(circle,transparent 77.600px,#000 78.400px,#000 93.5px,transparent 94.3px);"></div>
<div style="left:101px;top:436px;width:101.5px;height:101px;background:linear-gradient(to bottom,rgba(0,0,0,0),#000),linear-gradient(to right,#fff,#f00);box-shadow:0 0 2px rgba(0,0,0,.5);"></div>
<div style="left:97px;top:533px;width:8px;height:8px;border:1.3px solid #fff;border-radius:50%;box-sizing:border-box;box-shadow:0 0 0 0.7px #222, inset 0 0 0 0.7px #222;"></div>
<div style="left:0px;top:0px;width:0px;height:0px;left:77px;top:443px;"><div style="left:-7.500px;top:-4.700px;width:15px;height:9.400px;background:#e01010;border:2.200px solid #fff;box-sizing:border-box;outline:0.800px solid #3a3a3a;transform:rotate(30deg)"></div></div>
<div style="left:61px;top:556px;width:23px;height:23px;background:#fff;border:1px solid #6a6a6a;box-sizing:border-box;border-radius:3px;box-shadow:inset 0 0 0 1.5px #4d4d4d;"></div>
<div style="left:48px;top:545px;width:24px;height:24px;background:#000;border:2px solid #7e92c6;box-sizing:border-box;border-radius:4px;"></div>
<div style="left:48px;top:582px;width:36px;height:11px;background:#4d4d4d;border:1px solid #6a6a6a;box-sizing:border-box;border-radius:3px;"></div>
<div style="left:51px;top:585px;width:30px;height:5px;background:repeating-conic-gradient(#fff 0 25%,#888 0 50%) 0 0/7px 5px;border-radius:1px;"></div>
<div style="left:133px;top:584px;width:8px;height:8px;background:#444;border-radius:1.500px;border:1px solid #c4c4c4;box-sizing:border-box;"></div>
<div class="t" style="left:134.4px;top:584.3px;font-size:7.5px;color:#d8d8d8;font-weight:bold;">H</div>
<div style="left:165px;top:584px;width:8px;height:8px;background:#444;border-radius:1.500px;border:1px solid #c4c4c4;box-sizing:border-box;"></div>
<div class="t" style="left:166.4px;top:584.3px;font-size:7.5px;color:#d8d8d8;font-weight:bold;">S</div>
<div style="left:197px;top:584px;width:8px;height:8px;background:#b8b8b8;border-radius:1.500px;"></div>
<div class="t" style="left:198.3px;top:584.3px;font-size:7.5px;color:#333;font-weight:bold;">V</div>
<div class="t m" style="left:155px;top:582px;font-size:12px;color:#f0f0f0">0</div>
<div class="t m" style="left:187px;top:582px;font-size:12px;color:#f0f0f0">0</div>
<div class="t m" style="left:219px;top:582px;font-size:12px;color:#f0f0f0">0</div>
<svg style="left:235px;top:575px;" width="17" height="17" viewBox="0 0 17 17" fill="none" stroke="#b9b9b9" stroke-width="1"><circle cx="8.5" cy="8.5" r="7" stroke="#d0d0d0" stroke-width="1.2"/><path d="M6 4.5 L12 8.5 L6 12.5 Z" stroke="#d0d0d0" stroke-width="1.1"/></svg>
<div style="left:257.5px;top:48.5px;width:386.5px;height:24.3px;background:#4a4a4a;"></div>
<div style="left:592px;top:49.3px;width:24.2px;height:23.5px;background:#65708a;border-radius:2.5px;"></div>
<div style="left:348px;top:51px;width:1.2px;height:20px;background:#646464;"></div>
<div style="left:404px;top:51px;width:1.2px;height:20px;background:#646464;"></div>
<div style="left:508px;top:51px;width:1.2px;height:20px;background:#646464;"></div>
<div style="left:588px;top:51px;width:1.2px;height:20px;background:#646464;"></div>
<svg style="left:264px;top:52px;" width="18" height="19" viewBox="0 0 18 19" fill="none" stroke="#b9b9b9" stroke-width="1"><path d="M9 16.800 L3 16.800 L0.700 14.500 L0.700 2.500 Q0.700 0.700 2.500 0.700 L11 0.700 Q12.800 0.700 12.800 2.500 L12.800 9.500" stroke="#c4c4c4" stroke-width="1.300"/><path d="M0.700 13.500 L3.500 13.500 L3.500 16.500" stroke="#c4c4c4" stroke-width="1.100"/><circle cx="12.500" cy="14.200" r="4.300" fill="#c4c4c4" stroke="#4a4a4a" stroke-width="0.800"/><path d="M12.500 11.500 L12.500 16.900 M9.800 14.200 L15.200 14.200" stroke="#3a3a3a" stroke-width="1.300"/></svg>
<svg style="left:286px;top:52px;" width="19" height="18" viewBox="0 0 19 18" fill="none" stroke="#b9b9b9" stroke-width="1"><path d="M0.700 16.500 L0.700 3 Q0.700 1.700 2 1.700 L6.500 1.700 L8 3.700 L9.500 3.700" stroke="#c4c4c4" stroke-width="1.300"/><path d="M1 17 L3.800 8.200 L18.300 8.200 L15.500 17 Z" fill="#c4c4c4" stroke="none"/><path d="M9 6.500 Q10 2.800 15 2.800 M13 0.500 L15.800 2.800 L13 5.200" stroke="#c4c4c4" stroke-width="1.200"/><path d="M15 17 L15 9" stroke="#c4c4c4" stroke-width="1"/></svg>
<svg style="left:309px;top:51.5px;" width="20" height="18" viewBox="0 0 20 18" fill="none" stroke="#b9b9b9" stroke-width="1"><path d="M9.500 0.500 L9.500 9 M6 5.800 L9.500 9.300 L13 5.800" stroke="#7c7c7c" stroke-width="1.300"/><path d="M6.500 4.500 L5 4.500 L0.800 13 L0.800 16.300 Q0.800 17.300 1.800 17.300 L17.200 17.300 Q18.200 17.300 18.200 16.300 L18.200 13 L14 4.500 L12.500 4.500 M0.800 13 L18.200 13" stroke="#7c7c7c" stroke-width="1.200"/></svg>
<svg style="left:333.5px;top:59.3px;" width="7" height="5" viewBox="0 0 7 5" fill="none" stroke="#b9b9b9" stroke-width="1"><path d="M0.500 0.800 L3.500 4.100 L6.500 0.800" stroke="#c8c8c8" stroke-width="1.150"/></svg>
<svg style="left:356.5px;top:52.5px;" width="16" height="16" viewBox="0 0 16 16" fill="none" stroke="#b9b9b9" stroke-width="1"><path d="M1 4.500 L9.500 4.500 Q14.800 4.500 14.800 9.500 Q14.800 14.800 9.500 14.800 L3 14.800" stroke="#7c7c7c" stroke-width="1.400"/><path d="M0.300 4.500 L5.500 0.300 L5.500 8.700 Z" fill="#7c7c7c" stroke="none"/></svg>
<svg style="left:380px;top:52.5px;" width="16" height="16" viewBox="0 0 16 16" fill="none" stroke="#b9b9b9" stroke-width="1"><path d="M15 4.500 L6.500 4.500 Q1.200 4.500 1.200 9.500 Q1.200 14.800 6.500 14.800 L13 14.800" stroke="#7c7c7c" stroke-width="1.400"/><path d="M15.700 4.500 L10.500 0.300 L10.500 8.700 Z" fill="#7c7c7c" stroke="none"/></svg>
<svg style="left:410.2px;top:50.6px;" width="20" height="20" viewBox="0 0 20 20" fill="none" stroke="#b9b9b9" stroke-width="1"><g stroke="#c4c4c4" stroke-width="1.500" stroke-linecap="round"><path d="M15.50 10.00 L18.60 10.00"/><path d="M14.76 12.75 L17.45 14.30"/><path d="M12.75 14.76 L14.30 17.45"/><path d="M10.00 15.50 L10.00 18.60"/><path d="M7.25 14.76 L5.70 17.45"/><path d="M5.24 12.75 L2.55 14.30"/><path d="M4.50 10.00 L1.40 10.00"/><path d="M5.24 7.25 L2.55 5.70"/><path d="M7.25 5.24 L5.70 2.55"/><path d="M10.00 4.50 L10.00 1.40"/><path d="M12.75 5.24 L14.30 2.55"/><path d="M14.76 7.25 L17.45 5.70"/></g></svg>
<svg style="left:435.5px;top:52.5px;" width="18" height="18" viewBox="0 0 18 18" fill="none" stroke="#b9b9b9" stroke-width="1"><rect x="0.600" y="0.600" width="11.500" height="11.500" stroke="#7c7c7c" stroke-width="1" stroke-dasharray="2 1.200"/><g transform="translate(7.500,7.500)" stroke="#7c7c7c" stroke-width="1"><path d="M7.50 5.00 L9.50 5.00"/><path d="M7.02 6.47 L8.64 7.65"/><path d="M5.77 7.38 L6.39 9.28"/><path d="M4.23 7.38 L3.61 9.28"/><path d="M2.98 6.47 L1.36 7.65"/><path d="M2.50 5.00 L0.50 5.00"/><path d="M2.98 3.53 L1.36 2.35"/><path d="M4.23 2.62 L3.61 0.72"/><path d="M5.77 2.62 L6.39 0.72"/><path d="M7.02 3.53 L8.64 2.35"/></g></svg>
<svg style="left:458.5px;top:52px;" width="20" height="18" viewBox="0 0 20 18" fill="none" stroke="#b9b9b9" stroke-width="1"><path d="M10.500 0.500 L19.500 9 L10.500 17.500 L2.500 9.500 Z" fill="#c4c4c4" stroke="none"/><path d="M10.500 2.500 L15.800 7.500 L5.300 7.500 Z" fill="#4a4a4a" stroke="none"/><path d="M4.500 7.800 Q0.500 9 0.800 14.500 Q3.500 14.800 4 11.500 Z" fill="#c4c4c4" stroke="none"/></svg>
<svg style="left:484px;top:51px;" width="16" height="19" viewBox="0 0 16 19" fill="none" stroke="#b9b9b9" stroke-width="1"><rect x="2.300" y="4.800" width="11.800" height="12.200" stroke="#c4c4c4" stroke-width="1.300"/><path d="M8.200 0.800 L8.200 4.500" stroke="#c4c4c4" stroke-width="1.200"/><g fill="#c4c4c4" stroke="none"><circle cx="8.200" cy="1.300" r="1.300"/><rect x="6.900" y="3.500" width="2.600" height="2.600"/><rect x="6.900" y="15.700" width="2.600" height="2.600"/><rect x="1" y="9.600" width="2.600" height="2.600"/><rect x="12.800" y="9.600" width="2.600" height="2.600"/></g></svg>
<svg style="left:515.5px;top:52.5px;" width="18" height="17" viewBox="0 0 18 17" fill="none" stroke="#b9b9b9" stroke-width="1"><rect x="2" y="1.500" width="13.500" height="14" stroke="#7c7c7c" stroke-width="1" stroke-dasharray="2.200 1.300"/><path d="M0.300 0.300 L17.500 16.800" stroke="#7c7c7c" stroke-width="1"/></svg>
<svg style="left:540px;top:52.5px;" width="17" height="17" viewBox="0 0 17 17" fill="none" stroke="#b9b9b9" stroke-width="1"><path d="M14.500 1.500 L1.500 1.500 L1.500 15.500" stroke="#7c7c7c" stroke-width="1" stroke-dasharray="2.200 1.300"/><path d="M15.500 1 L15.500 15.800 L1 15.800 Z" fill="#7c7c7c" stroke="none"/><path d="M16 0.500 L0.500 16.300" stroke="#4a4a4a" stroke-width="1.500"/></svg>
<svg style="left:564px;top:52.5px;" width="17" height="17" viewBox="0 0 17 17" fill="none" stroke="#b9b9b9" stroke-width="1"><rect x="0.600" y="0.600" width="15" height="15.300" rx="2.200" stroke="#7c7c7c" stroke-width="1.100"/><rect x="3" y="3" width="10.200" height="10.500" rx="1" stroke="#7c7c7c" stroke-width="1" stroke-dasharray="2 1.200"/></svg>
<svg style="left:595px;top:52px;" width="20" height="19" viewBox="0 0 20 19" fill="none" stroke="#b9b9b9" stroke-width="1"><path d="M1.500 0.500 L1.500 17.500 L18 17.500 Z" stroke="#c4c8d6" stroke-width="0.900" stroke-linejoin="miter"/><path d="M1.500 8 L1.500 17.500 L11 17.500" stroke="#d4d7e0" stroke-width="1.300"/><path d="M9.500 9.800 L16.800 2.200" stroke="#d4d7e0" stroke-width="2" stroke-linecap="round"/><path d="M7.500 12 L8.300 9.500 L10 11.200 Z" fill="#d4d7e0" stroke="none"/></svg>
<svg style="left:635px;top:59.3px;" width="7" height="5" viewBox="0 0 7 5" fill="none" stroke="#b9b9b9" stroke-width="1"><path d="M0.500 0.800 L3.500 4.100 L6.500 0.800" stroke="#c8c8c8" stroke-width="1.150"/></svg>
<div style="left:257px;top:75px;width:387px;height:17.7px;background:#3a3a3a;"></div>
<div style="left:257px;top:75px;width:100px;height:17.7px;background:#65708a;"></div>
<div class="t" style="left:260.8px;top:78.3px;font-size:10.5px;color:#eeeeee;">插画</div>
<svg style="left:342.5px;top:80.5px;" width="9" height="9" viewBox="0 0 9 9" fill="none" stroke="#b9b9b9" stroke-width="1"><path d="M0.800 0.800 L8 8 M8 0.800 L0.800 8" stroke="#e0e0e0" stroke-width="1"/></svg>
<svg style="left:635px;top:81.3px;" width="7" height="5" viewBox="0 0 7 5" fill="none" stroke="#b9b9b9" stroke-width="1"><path d="M0.500 0.800 L3.500 4.100 L6.500 0.800" stroke="#c8c8c8" stroke-width="1.150"/></svg>
<div style="left:257.5px;top:92.5px;width:374.5px;height:451.5px;background:#2e2e2e;"></div>
<div style="left:632px;top:92.5px;width:12px;height:451.5px;background:#3c3c3c;"></div>
<div style="left:632px;top:95px;width:12px;height:11px;background:#525252;border-radius:2px;"></div>
<svg style="left:634.5px;top:98.5px;" width="7" height="5" viewBox="0 0 7 5" fill="none" stroke="#b9b9b9" stroke-width="1"><path d="M0.500 4.200 L3.500 0.900 L6.500 4.200" stroke="#c8c8c8" stroke-width="1.150"/></svg>
<div style="left:632px;top:532px;width:12px;height:11px;background:#525252;border-radius:2px;"></div>
<svg style="left:634.5px;top:535.5px;" width="7" height="5" viewBox="0 0 7 5" fill="none" stroke="#b9b9b9" stroke-width="1"><path d="M0.500 0.800 L3.500 4.100 L6.500 0.800" stroke="#c8c8c8" stroke-width="1.150"/></svg>
<div style="left:633.5px;top:218px;width:9px;height:201px;background:#4e4e4e;border-radius:5px;"></div>
<div style="left:268px;top:185.5px;width:354px;height:266px;background:#fff;"></div>
<div style="left:257px;top:543.5px;width:387.5px;height:12.5px;background:#444;"></div>
<div style="left:632px;top:543.5px;width:12.5px;height:12.5px;background:#4a4a4a;"></div>
<svg style="left:259px;top:544.5px;" width="98" height="10.7" viewBox="0 0 98 10.7" fill="none" stroke="#b9b9b9" stroke-width="1"><rect x="0" y="0" width="98" height="10.700" fill="#4a4a4a" stroke="none"/><path d="M0 10.700 L98 0 L98 10.700 Z" fill="#2c2c2c" stroke="none"/><rect x="40" y="0" width="58" height="10.700" fill="#2c2c2c" stroke="none" opacity="0.750"/></svg>
<div style="left:259px;top:544.5px;width:98px;height:10.7px;border:1px solid #686868;box-sizing:border-box;"></div>
<div style="left:296px;top:544px;width:3.6px;height:12px;background:#5a5a5a;border:1px solid #858585;box-sizing:border-box;"></div>
<div class="t m" style="left:331px;top:545.300px;font-size:12px;color:#f0f0f0">22<i>.</i>1</div>
<div style="left:364.5px;top:549.8px;width:7.8px;height:1.5px;background:#989898;"></div>
<div style="left:384.8px;top:549.8px;width:8.2px;height:1.5px;background:#989898;"></div>
<div style="left:388.2px;top:546.4px;width:1.5px;height:8.2px;background:#989898;"></div>
<div style="left:405.2px;top:547.3px;width:6.2px;height:5.7px;background:#b4b4b4;"></div>
<svg style="left:419.5px;top:544.5px;" width="46.7" height="10.7" viewBox="0 0 46.7 10.7" fill="none" stroke="#b9b9b9" stroke-width="1"><rect x="0" y="0" width="46.700" height="10.700" fill="#2c2c2c" stroke="none"/><path d="M30 0 L46.700 0 L46.700 9 Z" fill="#484848" stroke="none"/></svg>
<div style="left:419.5px;top:544.5px;width:46.7px;height:10.7px;border:1px solid #686868;box-sizing:border-box;"></div>
<div class="t m" style="left:426.500px;top:545.300px;font-size:12px;color:#f0f0f0">0<i>.</i>0</div>
<div style="left:466.2px;top:544px;width:3.3px;height:12px;background:#5a5a5a;border:1px solid #858585;box-sizing:border-box;"></div>
<svg style="left:469.5px;top:544.8px;" width="47" height="10.4" viewBox="0 0 47 10.4" fill="none" stroke="#b9b9b9" stroke-width="1"><rect x="0" y="0" width="47" height="10.400" fill="#2c2c2c" stroke="none"/><path d="M1 10.400 Q 14 1 22 1 L 33 1 Q 40 3 47 9.500 L47 10.400 Z" fill="#484848" stroke="none"/></svg>
<div style="left:469.5px;top:544.8px;width:47px;height:10.4px;border:1px solid #686868;box-sizing:border-box;"></div>
<svg style="left:523px;top:545px;" width="11" height="9" viewBox="0 0 11 9" fill="none" stroke="#b9b9b9" stroke-width="1"><path d="M2.500 5.500 A3.800 3.800 0 1 1 9.800 7.500" stroke="#b8b8b8" stroke-width="1.100"/><path d="M0 4 L4.800 4.500 L2 8 Z" fill="#b8b8b8" stroke="none"/></svg>
<svg style="left:542.5px;top:545px;" width="11" height="9" viewBox="0 0 11 9" fill="none" stroke="#b9b9b9" stroke-width="1"><path d="M8.500 5.500 A3.800 3.800 0 1 0 1.200 7.500" stroke="#b8b8b8" stroke-width="1.100"/><path d="M11 4 L6.200 4.500 L9 8 Z" fill="#b8b8b8" stroke="none"/></svg>
<svg style="left:562.5px;top:544.3px;" width="11" height="11" viewBox="0 0 11 11" fill="none" stroke="#b9b9b9" stroke-width="1"><path d="M3.500 1.300 A4.600 4.600 0 1 0 5.500 0.800" stroke="#b8b8b8" stroke-width="1"/><path d="M5.500 0.500 L5.500 5.500" stroke="#b8b8b8" stroke-width="1"/><circle cx="5.500" cy="5.800" r="1.500" fill="#b8b8b8" stroke="none"/></svg>
<div style="left:578.3px;top:544.3px;width:11.8px;height:11.3px;background:#545454;border-radius:2px;"></div>
<div style="left:620.2px;top:544.3px;width:11.8px;height:11.3px;background:#545454;border-radius:2px;"></div>
<svg style="left:581.8px;top:546.3px;" width="5" height="8" viewBox="0 0 5 8" fill="none" stroke="#b9b9b9" stroke-width="1"><path d="M4.200 0.800 L1 3.800 L4.200 6.800" stroke="#d0d0d0" stroke-width="1.200"/></svg>
<svg style="left:623.7px;top:546.3px;" width="5" height="8" viewBox="0 0 5 8" fill="none" stroke="#b9b9b9" stroke-width="1"><path d="M0.800 0.800 L4 3.800 L0.800 6.800" stroke="#d0d0d0" stroke-width="1.200"/></svg>
<div style="left:599.5px;top:544.6px;width:10.4px;height:10.4px;background:#5c5c5c;border-radius:50%;"></div>
<div style="left:281px;top:560.8px;width:38.3px;height:33.4px;background:#4b4b4b;"></div>
<svg style="left:291.5px;top:568.5px;" width="17" height="17" viewBox="0 0 17 17" fill="none" stroke="#b9b9b9" stroke-width="1"><rect x="0.600" y="0.600" width="15.500" height="15.500" rx="1.800" stroke="#b4b4b4" stroke-width="1.100"/><path d="M4 0.600 L4 16 M12.700 0.600 L12.700 16" stroke="#b4b4b4" stroke-width="1"/><path d="M8.400 3.500 L10 5.500 L8.400 7.500 L6.800 5.500 Z M8.400 9 L10 11 L8.400 13 L6.800 11 Z" fill="#b4b4b4" stroke="none"/></svg>
<svg style="left:263.5px;top:562.5px;" width="9" height="5" viewBox="0 0 9 5" fill="none" stroke="#b9b9b9" stroke-width="1"><path d="M0.500 4.500 L4.500 0.700 L8.500 4.500" stroke="#8a8a8a" stroke-width="1"/></svg>
<svg style="left:263.5px;top:585px;" width="9" height="10" viewBox="0 0 9 10" fill="none" stroke="#b9b9b9" stroke-width="1"><path d="M0.500 0.800 L4.500 4.500 L8.500 0.800 M0.500 5 L4.500 8.800 L8.500 5" stroke="#8a8a8a" stroke-width="1"/></svg>
<div style="left:648.5px;top:71px;width:32.7px;height:29.7px;background:#4b4b4b;"></div>
<svg style="left:655.5px;top:77px;" width="19" height="19" viewBox="0 0 19 19" fill="none" stroke="#b9b9b9" stroke-width="1"><circle cx="9" cy="8.700" r="7.700" stroke="#aaaaaa" stroke-width="1.400"/><path d="M16.800 16.300 L8.500 8" stroke="#aaaaaa" stroke-width="2"/><path d="M5 4.700 L12 6 L6.300 11.700 Z" fill="#aaaaaa" stroke="#aaaaaa" stroke-width="0.800" stroke-linejoin="round"/></svg>
<div style="left:648.5px;top:107px;width:32.7px;height:29.7px;background:#4b4b4b;"></div>
<svg style="left:655.5px;top:113.8px;" width="19" height="17" viewBox="0 0 19 17" fill="none" stroke="#b9b9b9" stroke-width="1"><path d="M0.600 15.500 L0.600 1.600 Q0.600 0.600 1.600 0.600 L6 0.600 L7.300 2.600 L17 2.600 Q18 2.600 18 3.600 L18 15.500 Q18 16.500 17 16.500 L1.600 16.500 Q0.600 16.500 0.600 15.500 Z" stroke="#aaaaaa" stroke-width="1.200"/><path d="M0.600 0.600 L6 0.600 L7.300 2.600 L0.600 2.600 Z" fill="#aaaaaa" stroke="none"/><g fill="#a2a2a2" stroke="none"><ellipse cx="9.300" cy="9.800" rx="7" ry="2.100" transform="rotate(42 9.300 9.800)"/><ellipse cx="9.300" cy="9.800" rx="7" ry="2.100" transform="rotate(-42 9.300 9.800)"/></g></svg>
<div style="left:648.5px;top:143px;width:32.7px;height:29.7px;background:#4b4b4b;"></div>
<svg style="left:655.5px;top:149.8px;" width="19" height="17" viewBox="0 0 19 17" fill="none" stroke="#b9b9b9" stroke-width="1"><path d="M0.600 15.500 L0.600 1.600 Q0.600 0.600 1.600 0.600 L6 0.600 L7.300 2.600 L17 2.600 Q18 2.600 18 3.600 L18 15.500 Q18 16.500 17 16.500 L1.600 16.500 Q0.600 16.500 0.600 15.500 Z" stroke="#aaaaaa" stroke-width="1.200"/><path d="M0.600 0.600 L6 0.600 L7.300 2.600 L0.600 2.600 Z" fill="#aaaaaa" stroke="none"/><rect x="4.500" y="5.500" width="9.500" height="9" fill="#aaaaaa" opacity="0.600" stroke="none"/><path d="M7.500 14.500 L7.500 11.500 Q9.200 9 11 11.500 L11 14.500" stroke="#e0e0e0" stroke-width="1.100"/><rect x="4.500" y="5.500" width="9.500" height="9" stroke="#aaaaaa" stroke-width="0.800"/></svg>
<div style="left:648.5px;top:179px;width:32.7px;height:29.7px;background:#4b4b4b;"></div>
<svg style="left:655.5px;top:185.8px;" width="19" height="17" viewBox="0 0 19 17" fill="none" stroke="#b9b9b9" stroke-width="1"><path d="M0.600 15.500 L0.600 1.600 Q0.600 0.600 1.600 0.600 L6 0.600 L7.300 2.600 L17 2.600 Q18 2.600 18 3.600 L18 15.500 Q18 16.500 17 16.500 L1.600 16.500 Q0.600 16.500 0.600 15.500 Z" stroke="#aaaaaa" stroke-width="1.200"/><path d="M0.600 0.600 L6 0.600 L7.300 2.600 L0.600 2.600 Z" fill="#aaaaaa" stroke="none"/><path d="M5 6 L13.500 14 M13.500 6 L5 14" stroke="#c8c8c8" stroke-width="3" /></svg>
<div style="left:648.5px;top:215px;width:32.7px;height:29.7px;background:#4b4b4b;"></div>
<svg style="left:655.5px;top:221.8px;" width="19" height="17" viewBox="0 0 19 17" fill="none" stroke="#b9b9b9" stroke-width="1"><path d="M0.600 15.500 L0.600 1.600 Q0.600 0.600 1.600 0.600 L6 0.600 L7.300 2.600 L17 2.600 Q18 2.600 18 3.600 L18 15.500 Q18 16.500 17 16.500 L1.600 16.500 Q0.600 16.500 0.600 15.500 Z" stroke="#aaaaaa" stroke-width="1.200"/><path d="M0.600 0.600 L6 0.600 L7.300 2.600 L0.600 2.600 Z" fill="#aaaaaa" stroke="none"/><g fill="#aaaaaa" stroke="none"><rect x="4.60" y="5.80" width="1.700" height="1.700"/><rect x="4.60" y="9.20" width="1.700" height="1.700"/><rect x="4.60" y="12.60" width="1.700" height="1.700"/><rect x="6.30" y="7.50" width="1.700" height="1.700"/><rect x="6.30" y="10.90" width="1.700" height="1.700"/><rect x="8.00" y="5.80" width="1.700" height="1.700"/><rect x="8.00" y="9.20" width="1.700" height="1.700"/><rect x="8.00" y="12.60" width="1.700" height="1.700"/><rect x="9.70" y="7.50" width="1.700" height="1.700"/><rect x="9.70" y="10.90" width="1.700" height="1.700"/><rect x="11.40" y="5.80" width="1.700" height="1.700"/><rect x="11.40" y="9.20" width="1.700" height="1.700"/><rect x="11.40" y="12.60" width="1.700" height="1.700"/><rect x="13.10" y="7.50" width="1.700" height="1.700"/><rect x="13.10" y="10.90" width="1.700" height="1.700"/></g></svg>
<div style="left:648.5px;top:251px;width:32.7px;height:29.7px;background:#4b4b4b;"></div>
<svg style="left:655.5px;top:257.8px;" width="19" height="17" viewBox="0 0 19 17" fill="none" stroke="#b9b9b9" stroke-width="1"><path d="M0.600 15.500 L0.600 1.600 Q0.600 0.600 1.600 0.600 L6 0.600 L7.300 2.600 L17 2.600 Q18 2.600 18 3.600 L18 15.500 Q18 16.500 17 16.500 L1.600 16.500 Q0.600 16.500 0.600 15.500 Z" stroke="#aaaaaa" stroke-width="1.200"/><path d="M0.600 0.600 L6 0.600 L7.300 2.600 L0.600 2.600 Z" fill="#aaaaaa" stroke="none"/><rect x="4" y="5.500" width="10.500" height="9" stroke="#aaaaaa" stroke-width="1"/><path d="M4 8 L14.500 8 M9 8 L9 14.500" stroke="#aaaaaa" stroke-width="1"/><rect x="5.500" y="9.500" width="2.500" height="3.500" fill="#aaaaaa" stroke="none"/></svg>
<div style="left:648.5px;top:287px;width:32.7px;height:29.7px;background:#4b4b4b;"></div>
<svg style="left:655.5px;top:293.8px;" width="19" height="17" viewBox="0 0 19 17" fill="none" stroke="#b9b9b9" stroke-width="1"><path d="M0.600 15.500 L0.600 1.600 Q0.600 0.600 1.600 0.600 L6 0.600 L7.300 2.600 L17 2.600 Q18 2.600 18 3.600 L18 15.500 Q18 16.500 17 16.500 L1.600 16.500 Q0.600 16.500 0.600 15.500 Z" stroke="#aaaaaa" stroke-width="1.200"/><path d="M0.600 0.600 L6 0.600 L7.300 2.600 L0.600 2.600 Z" fill="#aaaaaa" stroke="none"/><path d="M4.500 6 L7.500 9 M14 6 L11 9 M4.500 14 L7.500 11 M14 14 L11 11" stroke="#aaaaaa" stroke-width="1.200"/><path d="M5.500 9 L7.500 9 L7.500 7 M13 9 L11 9 L11 7 M5.500 11 L7.500 11 L7.500 13 M13 11 L11 11 L11 13" stroke="#aaaaaa" stroke-width="1"/></svg>
<div style="left:648.5px;top:323px;width:32.7px;height:29.7px;background:#4b4b4b;"></div>
<svg style="left:655.5px;top:329.8px;" width="19" height="17" viewBox="0 0 19 17" fill="none" stroke="#b9b9b9" stroke-width="1"><path d="M0.600 15.500 L0.600 1.600 Q0.600 0.600 1.600 0.600 L6 0.600 L7.300 2.600 L17 2.600 Q18 2.600 18 3.600 L18 15.500 Q18 16.500 17 16.500 L1.600 16.500 Q0.600 16.500 0.600 15.500 Z" stroke="#aaaaaa" stroke-width="1.200"/><path d="M0.600 0.600 L6 0.600 L7.300 2.600 L0.600 2.600 Z" fill="#aaaaaa" stroke="none"/><rect x="4" y="5.500" width="10.500" height="8.500" stroke="#aaaaaa" stroke-width="1"/><path d="M4.500 13.500 L7.500 10 L9.500 12 L11.500 9.500 L14 13.500 Z" fill="#aaaaaa" stroke="none"/></svg>
<div style="left:648.5px;top:359px;width:32.7px;height:29.7px;background:#4b4b4b;"></div>
<svg style="left:655.5px;top:365.8px;" width="19" height="17" viewBox="0 0 19 17" fill="none" stroke="#b9b9b9" stroke-width="1"><path d="M0.600 15.500 L0.600 1.600 Q0.600 0.600 1.600 0.600 L6 0.600 L7.300 2.600 L17 2.600 Q18 2.600 18 3.600 L18 15.500 Q18 16.500 17 16.500 L1.600 16.500 Q0.600 16.500 0.600 15.500 Z" stroke="#aaaaaa" stroke-width="1.200"/><path d="M0.600 0.600 L6 0.600 L7.300 2.600 L0.600 2.600 Z" fill="#aaaaaa" stroke="none"/><path d="M12 6.500 L5 6.500 L5 14 L13 14 L13 10" stroke="#aaaaaa" stroke-width="1.100"/><path d="M8 11.500 L14.500 4.800" stroke="#aaaaaa" stroke-width="1.600"/></svg>
<div style="left:648.5px;top:395px;width:32.7px;height:29.7px;background:#4b4b4b;"></div>
<svg style="left:655.5px;top:401.8px;" width="19" height="17" viewBox="0 0 19 17" fill="none" stroke="#b9b9b9" stroke-width="1"><path d="M0.600 15.500 L0.600 1.600 Q0.600 0.600 1.600 0.600 L6 0.600 L7.300 2.600 L17 2.600 Q18 2.600 18 3.600 L18 15.500 Q18 16.500 17 16.500 L1.600 16.500 Q0.600 16.500 0.600 15.500 Z" stroke="#aaaaaa" stroke-width="1.200"/><path d="M0.600 0.600 L6 0.600 L7.300 2.600 L0.600 2.600 Z" fill="#aaaaaa" stroke="none"/><path d="M9.200 4.800 L14 7.200 L14 12.300 L9.200 14.800 L4.500 12.300 L4.500 7.200 Z M4.500 7.200 L9.200 9.600 L14 7.200 M9.200 9.600 L9.200 14.800" stroke="#aaaaaa" stroke-width="1"/></svg>
<div style="left:648.5px;top:431px;width:32.7px;height:29.7px;background:#4b4b4b;"></div>
<svg style="left:655.5px;top:437.8px;" width="19" height="17" viewBox="0 0 19 17" fill="none" stroke="#b9b9b9" stroke-width="1"><path d="M0.600 15.500 L0.600 1.600 Q0.600 0.600 1.600 0.600 L6 0.600 L7.300 2.600 L17 2.600 Q18 2.600 18 3.600 L18 15.500 Q18 16.500 17 16.500 L1.600 16.500 Q0.600 16.500 0.600 15.500 Z" stroke="#aaaaaa" stroke-width="1.200"/><path d="M0.600 0.600 L6 0.600 L7.300 2.600 L0.600 2.600 Z" fill="#aaaaaa" stroke="none"/><circle cx="9.300" cy="5.800" r="1.300" fill="#aaaaaa" stroke="none"/><path d="M4.500 8 L14 8" stroke="#aaaaaa" stroke-width="1.400"/><path d="M9.300 8 L9.300 11 M9.300 11 L6.800 15 M9.300 11 L11.800 15" stroke="#aaaaaa" stroke-width="1.500"/></svg>
<div style="left:686px;top:69px;width:240.5px;height:17px;background:#3a3a3a;"></div>
<div style="left:692px;top:75.5px;width:7px;height:1px;background:#828282;"></div>
<div style="left:692px;top:78.5px;width:7px;height:1px;background:#828282;"></div>
<div style="left:692px;top:81.5px;width:7px;height:1px;background:#828282;"></div>
<div style="left:705px;top:72px;width:60px;height:14px;background:#505050;"></div>
<div style="left:766px;top:72px;width:29px;height:13px;background:#484848;"></div>
<div style="left:796px;top:72px;width:29px;height:13px;background:#484848;"></div>
<div style="left:826px;top:72px;width:29px;height:13px;background:#484848;"></div>
<div style="left:686px;top:86px;width:240.5px;height:5.5px;background:#505050;"></div>
<div class="t" style="left:733px;top:77px;font-size:9.6px;color:#dcdcdc;height:9px;overflow:hidden;">导航器</div>
<svg style="left:711.5px;top:76px;height:10.500px;overflow:hidden;" width="16" height="13" viewBox="0 0 16 13" fill="none" stroke="#b9b9b9" stroke-width="1"><rect x="3.800" y="0.800" width="11" height="8.300" rx="1.300" fill="#8a8a8a" stroke="#c8c8c8" stroke-width="1.100"/><path d="M2.200 3.200 Q0.700 3.200 0.700 4.700 L0.700 10.800 Q0.700 12.200 2.200 12.200 L10.500 12.200 Q12 12.200 12 10.800" stroke="#c8c8c8" stroke-width="1.100"/></svg>
<div style="left:766px;top:72px;width:90px;height:12.8px;overflow:hidden;"><svg style="left:8px;top:4px" width="14" height="12" viewBox="0 0 14 12" fill="none" stroke="#7e7e7e" stroke-width="1.200"><rect x="0.600" y="0.600" width="12.500" height="12"/><path d="M2.500 9 L5 6.500 L7 8 L10.500 5 L10.500 10 L2.500 10Z" fill="#7e7e7e" stroke="none"/></svg><svg style="left:37px;top:4.500px" width="16" height="12" viewBox="0 0 16 12" fill="none" stroke="#7e7e7e" stroke-width="1.200"><path d="M0.800 9.500 Q0.800 0.800 8 0.800 Q15.200 0.800 15.200 9.500 M0.800 7 L15.200 7"/></svg><svg style="left:67px;top:4px" width="16" height="14" viewBox="0 0 16 14" fill="none" stroke="#7e7e7e" stroke-width="1.200"><circle cx="8" cy="8" r="7.200"/><path d="M8 6.500 L8 12" stroke-width="1.600"/><circle cx="8" cy="3.800" r="1" fill="#7e7e7e" stroke="none"/></svg></div>
<div style="left:686px;top:91.5px;width:240.5px;height:104px;background:#2e2e2e;"></div>
<div style="left:738px;top:92px;width:137px;height:103.5px;background:#fff;"></div>
<div style="left:734px;top:91.5px;width:1.2px;height:104px;background:#e81010;"></div>
<div style="left:879px;top:91.5px;width:1.2px;height:104px;background:#e81010;"></div>
<div style="left:686px;top:195.5px;width:240.5px;height:43.8px;background:#4d4d4d;"></div>
<svg style="left:691px;top:203px;" width="85" height="11.5" viewBox="0 0 85 11.5" fill="none" stroke="#b9b9b9" stroke-width="1"><path d="M1 10.5 L84 1 L84 10.5 Z" fill="#2e2e2e" stroke="none"/></svg>
<div style="left:691px;top:203px;width:85px;height:11.5px;border:1px solid #6e6e6e;box-sizing:border-box;"></div>
<div style="left:723px;top:199px;width:4px;height:19.5px;background:#707070;border:1px solid #858585;box-sizing:border-box;"></div>
<svg style="left:691px;top:223px;" width="85" height="11.5" viewBox="0 0 85 11.5" fill="none" stroke="#b9b9b9" stroke-width="1"><path d="M1 1 Q 12 10.5 34 10.5 L1 10.5Z M44 10.5 Q 50 1 56 1 L 66 1 Q 74 3 84 10.5 Z" fill="#2e2e2e" stroke="none"/></svg>
<div style="left:691px;top:223px;width:85px;height:11.5px;border:1px solid #6e6e6e;box-sizing:border-box;"></div>
<div style="left:732px;top:219px;width:4px;height:19.5px;background:#707070;border:1px solid #858585;box-sizing:border-box;"></div>
<div class="t m" style="left:797.500px;top:203.300px;font-size:12px;color:#f0f0f0">22<i>.</i>1</div>
<div class="t m" style="left:803.500px;top:223.300px;font-size:12px;color:#f0f0f0">0<i>.</i>0</div>
<div style="left:884px;top:202px;width:1px;height:15.5px;background:#707070;"></div>
<div style="left:884px;top:222px;width:1px;height:15.5px;background:#707070;"></div>
<svg style="left:824.5px;top:201.5px;" width="16" height="16" viewBox="0 0 16 16" fill="none" stroke="#b9b9b9" stroke-width="1"><circle cx="8" cy="8" r="7" stroke="#c8c8c8" stroke-width="1.100"/><path d="M4 8 L12 8" stroke="#c8c8c8" stroke-width="1.100"/></svg>
<svg style="left:844.5px;top:201.5px;" width="16" height="16" viewBox="0 0 16 16" fill="none" stroke="#b9b9b9" stroke-width="1"><circle cx="8" cy="8" r="7" stroke="#c8c8c8" stroke-width="1.100"/><path d="M4 8 L12 8 M8 4 L8 12" stroke="#c8c8c8" stroke-width="1.100"/></svg>
<svg style="left:864.5px;top:201.5px;" width="16" height="16" viewBox="0 0 16 16" fill="none" stroke="#b9b9b9" stroke-width="1"><circle cx="8" cy="8" r="7" stroke="#c8c8c8" stroke-width="1.100"/><rect x="5" y="5" width="6" height="6" rx="0.800" fill="#c8c8c8" stroke="none"/></svg>
<svg style="left:889px;top:203px;" width="14" height="13" viewBox="0 0 14 13" fill="none" stroke="#b9b9b9" stroke-width="1"><rect x="0.600" y="0.600" width="8" height="7.500" stroke="#c8c8c8" stroke-width="1.100"/><rect x="5.200" y="4.800" width="8" height="7.500" fill="#4d4d4d" stroke="#c8c8c8" stroke-width="1.100"/><path d="M2.500 2.500 L11 10.500 M2.500 5 L2.500 2.500 L5 2.500 M11 8 L11 10.500 L8.500 10.500" stroke="#c8c8c8" stroke-width="1"/></svg>
<svg style="left:910px;top:203px;" width="13" height="13" viewBox="0 0 13 13" fill="none" stroke="#b9b9b9" stroke-width="1"><rect x="0.600" y="0.600" width="11.500" height="11.500" rx="0.800" stroke="#c8c8c8" stroke-width="1.100"/><path d="M3 3 L9.700 9.700 M3 6 L3 3 L6 3 M9.700 6.700 L9.700 9.700 L6.700 9.700" stroke="#c8c8c8" stroke-width="1.100"/></svg>
<svg style="left:824.5px;top:221.5px;" width="16" height="16" viewBox="0 0 16 16" fill="none" stroke="#b9b9b9" stroke-width="1"><path d="M3 8 A5.800 5.800 0 1 1 8.500 13.800" stroke="#c8c8c8" stroke-width="1.100"/><path d="M0.300 6.500 L5.800 6.500 L3 10.300 Z" fill="#c8c8c8" stroke="none"/></svg>
<svg style="left:844.5px;top:221.5px;" width="16" height="16" viewBox="0 0 16 16" fill="none" stroke="#b9b9b9" stroke-width="1"><path d="M13 8 A5.800 5.800 0 1 0 7.500 13.800" stroke="#c8c8c8" stroke-width="1.100"/><path d="M15.700 6.500 L10.200 6.500 L13 10.300 Z" fill="#c8c8c8" stroke="none"/></svg>
<svg style="left:864.5px;top:221.5px;" width="16" height="16" viewBox="0 0 16 16" fill="none" stroke="#b9b9b9" stroke-width="1"><path d="M5.300 2 A6.500 6.500 0 1 0 8 1.300" stroke="#c8c8c8" stroke-width="1.100"/><path d="M8 0.800 L8 8" stroke="#c8c8c8" stroke-width="1.100"/><circle cx="8" cy="8.300" r="1.900" fill="#c8c8c8" stroke="none"/><path d="M2 5 L4.500 2.500" stroke="#c8c8c8" stroke-width="1" stroke-dasharray="1 1"/></svg>
<svg style="left:889px;top:224.5px;" width="16" height="9" viewBox="0 0 16 9" fill="none" stroke="#b9b9b9" stroke-width="1"><path d="M0.600 0.800 L5.800 4.500 L0.600 8.200 Z" stroke="#c8c8c8" stroke-width="1"/><path d="M7.700 0 L7.700 9" stroke="#c8c8c8" stroke-width="1"/><path d="M15 0.500 L9.500 4.500 L15 8.500 Z" fill="#c8c8c8" stroke="none"/></svg>
<svg style="left:909.5px;top:222.5px;" width="13" height="15" viewBox="0 0 13 15" fill="none" stroke="#b9b9b9" stroke-width="1"><path d="M1.500 0.300 L11.500 0.300 L6.500 5.500 Z" fill="#c8c8c8" stroke="none"/><path d="M0 7.200 L13 7.200" stroke="#c8c8c8" stroke-width="1"/><path d="M6.500 9 L10.800 13.800 L2.200 13.800 Z" stroke="#c8c8c8" stroke-width="1"/></svg>
<div style="left:686px;top:241px;width:240.5px;height:16.5px;background:#3a3a3a;"></div>
<div style="left:692px;top:247.5px;width:7px;height:1px;background:#828282;"></div>
<div style="left:692px;top:250.5px;width:7px;height:1px;background:#828282;"></div>
<div style="left:692px;top:253.5px;width:7px;height:1px;background:#828282;"></div>
<div style="left:705px;top:244px;width:70px;height:13.5px;background:#505050;"></div>
<div style="left:776px;top:244px;width:71px;height:12.5px;background:#484848;"></div>
<div style="left:848px;top:244px;width:71px;height:12.5px;background:#484848;"></div>
<div style="left:686px;top:257.5px;width:240.5px;height:5.5px;background:#505050;"></div>
<div class="t" style="left:733px;top:248.5px;font-size:9.6px;color:#dcdcdc;height:9px;overflow:hidden;width:40px;">图层属性</div>
<div style="left:705px;top:244px;width:70px;height:16px;overflow:hidden;"><svg style="left:7px;top:2.500px" width="17" height="15" viewBox="0 0 17 15" fill="none" stroke="#d0d0d0" stroke-width="1.100" stroke-linejoin="round"><path d="M7.500 0.800 L14 4 L7.500 7.200 L1 4 Z M1 6.800 L7.500 10 L10 8.800 M1 9.600 L7.500 12.800 L9.500 11.800"/><g fill="#d0d0d0" stroke="none"><rect x="11" y="8" width="1.800" height="1.800"/><rect x="14" y="8" width="1.800" height="1.800"/><rect x="11" y="11" width="1.800" height="1.800"/><rect x="14" y="11" width="1.800" height="1.800"/></g></svg></div>
<div style="left:776px;top:244px;width:143px;height:12.5px;overflow:hidden;"><div class="t" style="left:28px;top:5px;font-size:9.500px;color:#7c7c7c">图层搜索</div><div class="t" style="left:100px;top:5px;font-size:9.500px;color:#7c7c7c">动画胶片</div><svg style="left:9px;top:3.500px" width="16" height="12" viewBox="0 0 16 12" fill="none" stroke="#7e7e7e" stroke-width="1.100" stroke-linejoin="round"><path d="M7.500 0.800 L14 4 L7.500 7.200 L1 4 Z M1 6.800 L7.500 10"/><path d="M9.500 7.500 L15 7.500 L12.200 10.500Z" fill="#7e7e7e" stroke="none"/></svg><svg style="left:82px;top:3.500px" width="15" height="12" viewBox="0 0 15 12" fill="none" stroke="#7e7e7e" stroke-width="1.200"><circle cx="8" cy="6.500" r="5.800"/><path d="M8 0.700 A5.800 5.800 0 0 0 3.500 10.500 L12.500 3 A5.800 5.800 0 0 0 8 0.700Z" fill="#7e7e7e" stroke="none"/><path d="M0.500 11.500 L6 11.500"/></svg></div>
<div style="left:686px;top:263px;width:240.5px;height:210px;background:#3f3f3f;"></div>
<div style="left:912.8px;top:263px;width:13.7px;height:210px;background:#454545;"></div>
<div style="left:691px;top:272px;width:3.5px;height:1px;background:#7a7a7a;"></div>
<div style="left:721px;top:272px;width:188px;height:1px;background:#7a7a7a;"></div>
<div class="t" style="left:695px;top:267.8px;font-size:12px;color:#f0f0f0;">效果</div>
<div style="left:830.3px;top:280.3px;width:79.5px;height:19.2px;background:#565656;border:1px solid #6e6e6e;box-sizing:border-box;border-radius:2.500px;"></div>
<svg style="left:834px;top:283px;" width="60" height="14" viewBox="0 0 60 14" fill="none" stroke="#b9b9b9" stroke-width="1"><circle cx="7" cy="7" r="6.300" stroke="#c8c8c8" stroke-width="1.100"/><g fill="#c8c8c8" stroke="none"><rect x="22.00" y="1.00" width="1.400" height="1.400"/><rect x="23.35" y="3.40" width="1.400" height="1.400"/><rect x="22.00" y="5.80" width="1.400" height="1.400"/><rect x="23.35" y="8.20" width="1.400" height="1.400"/><rect x="22.00" y="10.60" width="1.400" height="1.400"/><rect x="23.35" y="13.00" width="1.400" height="1.400"/><rect x="24.70" y="1.00" width="1.400" height="1.400"/><rect x="26.05" y="3.40" width="1.400" height="1.400"/><rect x="24.70" y="5.80" width="1.400" height="1.400"/><rect x="26.05" y="8.20" width="1.400" height="1.400"/><rect x="24.70" y="10.60" width="1.400" height="1.400"/><rect x="26.05" y="13.00" width="1.400" height="1.400"/><rect x="27.40" y="1.00" width="1.400" height="1.400"/><rect x="28.75" y="3.40" width="1.400" height="1.400"/><rect x="27.40" y="5.80" width="1.400" height="1.400"/><rect x="28.75" y="8.20" width="1.400" height="1.400"/><rect x="27.40" y="10.60" width="1.400" height="1.400"/><rect x="28.75" y="13.00" width="1.400" height="1.400"/><rect x="30.10" y="1.00" width="1.400" height="1.400"/><rect x="31.45" y="3.40" width="1.400" height="1.400"/><rect x="30.10" y="5.80" width="1.400" height="1.400"/><rect x="31.45" y="8.20" width="1.400" height="1.400"/><rect x="30.10" y="10.60" width="1.400" height="1.400"/><rect x="31.45" y="13.00" width="1.400" height="1.400"/><rect x="32.80" y="1.00" width="1.400" height="1.400"/><rect x="32.80" y="5.80" width="1.400" height="1.400"/><rect x="32.80" y="10.60" width="1.400" height="1.400"/></g><rect x="48.500" y="4" width="10" height="10" rx="2" stroke="#c8c8c8" stroke-width="1.100"/><rect x="44.500" y="0.600" width="10.500" height="10.500" rx="2" fill="#8c8c8c" stroke="#c8c8c8" stroke-width="1.100"/></svg>
<svg style="left:897.5px;top:287.8px;" width="9" height="6" viewBox="0 0 9 6" fill="none" stroke="#b9b9b9" stroke-width="1"><path d="M0.500 0.700 L4.500 4.700 L8.500 0.700" stroke="#c8c8c8" stroke-width="1.150"/></svg>
<div style="left:691px;top:309px;width:3.5px;height:1px;background:#7a7a7a;"></div>
<div style="left:745px;top:309px;width:164px;height:1px;background:#7a7a7a;"></div>
<div class="t" style="left:695px;top:304.8px;font-size:12px;color:#f0f0f0;">颜色模式</div>
<div style="left:703.2px;top:320.3px;width:154.8px;height:19.2px;background:#565656;border:1px solid #6e6e6e;box-sizing:border-box;border-radius:2.500px;"></div>
<svg style="left:753px;top:323px;" width="17" height="15" viewBox="0 0 17 15" fill="none" stroke="#b9b9b9" stroke-width="1"><circle cx="8.500" cy="4.500" r="4.200" fill="#e05a5a" stroke="none"/><circle cx="4.500" cy="10.300" r="4.200" fill="#52c052" stroke="none"/><circle cx="12.300" cy="10.300" r="4.200" fill="#4a96e6" stroke="none"/><path d="M8.500 6.500 L10.500 9 L6.500 9Z" fill="#fff" stroke="none" opacity="0.850"/></svg>
<div class="t" style="left:772.6px;top:324.5px;font-size:12px;color:#f0f0f0;">彩色</div>
<svg style="left:845.8px;top:327.6px;" width="9" height="6" viewBox="0 0 9 6" fill="none" stroke="#b9b9b9" stroke-width="1"><path d="M0.500 0.700 L4.500 4.700 L8.500 0.700" stroke="#c8c8c8" stroke-width="1.150"/></svg>
<div style="left:686px;top:474.5px;width:240.5px;height:17px;background:#3a3a3a;"></div>
<div style="left:692px;top:481.0px;width:7px;height:1px;background:#828282;"></div>
<div style="left:692px;top:484.0px;width:7px;height:1px;background:#828282;"></div>
<div style="left:692px;top:487.0px;width:7px;height:1px;background:#828282;"></div>
<div style="left:705px;top:477.5px;width:51.5px;height:14px;background:#505050;"></div>
<div style="left:757.5px;top:477.5px;width:70.5px;height:13px;background:#484848;"></div>
<div style="left:829.5px;top:477.5px;width:70.0px;height:13px;background:#484848;"></div>
<div style="left:686px;top:491.5px;width:240.5px;height:105px;background:#4d4d4d;"></div>
<div class="t" style="left:733px;top:483px;font-size:9.6px;color:#dcdcdc;height:10.5px;overflow:hidden;">图层</div>
<svg style="left:711px;top:480px;" width="16" height="14" viewBox="0 0 16 14" fill="none" stroke="#b9b9b9" stroke-width="1"><path d="M8 0.800 L15 4.300 L8 7.800 L1 4.300 Z" stroke="#d0d0d0" stroke-width="1.200" stroke-linejoin="round"/><path d="M1 7.500 L8 11 L15 7.500 M1 10.700 L8 14.200 L15 10.700" stroke="#d0d0d0" stroke-width="1.200" stroke-linejoin="round"/></svg>
<div style="left:757px;top:477.5px;width:143px;height:13px;overflow:hidden;"><div class="t" style="left:29.500px;top:5.500px;font-size:9.500px;color:#7c7c7c">历史记录</div><div class="t" style="left:101.500px;top:5.500px;font-size:9.500px;color:#7c7c7c">自动动作</div><svg style="left:9px;top:3px" width="16" height="12" viewBox="0 0 16 12" fill="none" stroke="#7e7e7e" stroke-width="1.300"><path d="M1 3.500 L11 3.500 Q15 3.500 15 7.500 Q15 11.500 11 11.500 L4 11.500 M4.500 0.500 L1 3.500 L4.500 6.500"/></svg><svg style="left:80px;top:3px" width="17" height="12" viewBox="0 0 17 12" fill="none" stroke="#7e7e7e" stroke-width="1.200"><path d="M1 4.500 L15.500 1 M1.500 6 L1.500 12 M1.500 6 L15.500 6 L15.500 12"/><path d="M4 6 L6 9 M8 6 L10 9 M12 6 L14 9" /></svg></div>
<div style="left:687.5px;top:497.5px;width:38.3px;height:19.2px;background:#595959;border:1px solid #6e6e6e;box-sizing:border-box;border-radius:2.5px;"></div>
<div style="left:692px;top:500.5px;width:13.5px;height:13px;border:1.500px solid #8e8e8e;box-sizing:border-box;border-radius:3px;"></div>
<div style="left:729.2px;top:497.5px;width:76.8px;height:19.2px;background:#595959;border:1px solid #6e6e6e;box-sizing:border-box;border-radius:2.5px;"></div>
<div class="t" style="left:749px;top:502.5px;font-size:12px;color:#f0f0f0;">正常</div>
<svg style="left:713px;top:505.3px;" width="9" height="6" viewBox="0 0 9 6" fill="none" stroke="#b9b9b9" stroke-width="1"><path d="M0.500 0.700 L4.500 4.700 L8.500 0.700" stroke="#c8c8c8" stroke-width="1.150"/></svg>
<svg style="left:794.5px;top:505.3px;" width="9" height="6" viewBox="0 0 9 6" fill="none" stroke="#b9b9b9" stroke-width="1"><path d="M0.500 0.700 L4.500 4.700 L8.500 0.700" stroke="#c8c8c8" stroke-width="1.150"/></svg>
<div style="left:812px;top:502px;width:74.5px;height:9.3px;background:linear-gradient(to right,rgba(160,160,160,0),rgba(160,160,160,.55)),repeating-conic-gradient(#ffffff 0 25%,#dcdcdc 0 50%) 0 0/9.300px 9.300px;"></div>
<div style="left:886.3px;top:497.3px;width:3.6px;height:19.4px;background:#7a7a7a;border:1px solid #8e8e8e;box-sizing:border-box;"></div>
<div class="t m" style="left:894px;top:500.800px;font-size:12px;color:#f0f0f0">100</div>
<svg style="left:913.5px;top:500.8px;" width="7" height="5" viewBox="0 0 7 5" fill="none" stroke="#b9b9b9" stroke-width="1"><path d="M0.500 4.200 L3.500 0.900 L6.500 4.200" stroke="#c8c8c8" stroke-width="1.150"/></svg>
<svg style="left:913.5px;top:510.3px;" width="7" height="5" viewBox="0 0 7 5" fill="none" stroke="#b9b9b9" stroke-width="1"><path d="M0.500 0.800 L3.500 4.100 L6.500 0.800" stroke="#c8c8c8" stroke-width="1.150"/></svg>
<div style="left:818.4px;top:518.8px;width:34px;height:19.2px;background:#474747;border-radius:2.500px;"></div>
<div style="left:854.3px;top:518.8px;width:34.6px;height:19.2px;background:#474747;border-radius:2.500px;"></div>
<div style="left:891px;top:518.8px;width:34.6px;height:19.2px;background:#595959;border:1px solid #6e6e6e;box-sizing:border-box;border-radius:2.5px;"></div>
<div style="left:899px;top:526px;width:9.5px;height:9px;background:#fff;box-shadow:0 0 0 1px #595959;"></div>
<div style="left:894.2px;top:521.8px;width:9.8px;height:9px;background:#3b8df0;box-shadow:0 0 0 1px #595959;"></div>
<svg style="left:839.5px;top:526.3px;" width="9" height="6" viewBox="0 0 9 6" fill="none" stroke="#b9b9b9" stroke-width="1"><path d="M0.500 0.700 L4.500 4.700 L8.500 0.700" stroke="#8a8a8a" stroke-width="1.150"/></svg>
<svg style="left:876.5px;top:526.3px;" width="9" height="6" viewBox="0 0 9 6" fill="none" stroke="#b9b9b9" stroke-width="1"><path d="M0.500 0.700 L4.500 4.700 L8.500 0.700" stroke="#8a8a8a" stroke-width="1.150"/></svg>
<svg style="left:914px;top:526.3px;" width="9" height="6" viewBox="0 0 9 6" fill="none" stroke="#b9b9b9" stroke-width="1"><path d="M0.500 0.700 L4.500 4.700 L8.500 0.700" stroke="#c8c8c8" stroke-width="1.150"/></svg>
<svg style="left:719px;top:521px;" width="15" height="15" viewBox="0 0 15 15" fill="none" stroke="#b9b9b9" stroke-width="1"><rect x="0.600" y="3.800" width="10" height="10" rx="2" fill="#8a8a8a" stroke="none"/><rect x="3.500" y="0.700" width="10.500" height="10.500" rx="2" fill="#4d4d4d" stroke="#c0c0c0" stroke-width="1.100" stroke-dasharray="2.200 1.200"/></svg>
<svg style="left:738.5px;top:520.5px;" width="15" height="15" viewBox="0 0 15 15" fill="none" stroke="#b9b9b9" stroke-width="1"><path d="M5.500 14.500 L6.500 6.500 L8.500 6.500 L9.500 14.500 Z" fill="#c0c0c0" stroke="none"/><rect x="5.800" y="3" width="3.400" height="3" fill="#c0c0c0" stroke="none"/><path d="M7.500 0.500 L9.500 2.800 L5.500 2.800Z" fill="#c0c0c0" stroke="none"/><path d="M0.500 2.500 L5 4.300 M0.500 6.500 L5 4.800 M14.500 2.500 L10 4.300 M14.500 6.500 L10 4.800" stroke="#c0c0c0" stroke-width="1"/></svg>
<svg style="left:759.5px;top:520.5px;" width="15" height="15" viewBox="0 0 15 15" fill="none" stroke="#b9b9b9" stroke-width="1"><path d="M1 1 L6.500 0.800 L6.500 10 L1.500 10 Z" stroke="#c0c0c0" stroke-width="1.100"/><path d="M2.500 8.500 L3 4 L4 6 L5 3 L5.500 8.500 Z" fill="#c0c0c0" stroke="none"/><path d="M4 11 Q5 14 10 13.500 M8.500 11.500 L10.500 13.500 L8.500 15.300" stroke="#c0c0c0" stroke-width="1.100"/><path d="M9 8 L13 12" stroke="#c0c0c0" stroke-width="1.100"/></svg>
<svg style="left:780px;top:520.5px;" width="12" height="14" viewBox="0 0 12 14" fill="none" stroke="#b9b9b9" stroke-width="1"><path d="M2.800 6.500 L2.800 4 Q2.800 0.800 5.700 0.800 Q8.600 0.800 8.600 4 L8.600 6.500" stroke="#c0c0c0" stroke-width="1.500"/><rect x="0.500" y="6" width="10.500" height="7.500" rx="1" fill="#c0c0c0" stroke="none"/></svg>
<svg style="left:799px;top:520.5px;" width="15" height="14" viewBox="0 0 15 14" fill="none" stroke="#b9b9b9" stroke-width="1"><path d="M2.300 7 L2.300 5.300 Q2.300 3 4.500 3 Q6.700 3 6.700 5.300 L6.700 7" stroke="#c0c0c0" stroke-width="1.300"/><rect x="0.500" y="7" width="8" height="6.500" rx="0.800" fill="#c0c0c0" stroke="none"/><g fill="#c0c0c0" stroke="none"><rect x="7.500" y="0.500" width="3.500" height="3.500"/><rect x="11" y="4" width="3.500" height="3.500"/><rect x="11" y="10" width="3.500" height="3.500" opacity="0.600"/><rect x="9" y="7.200" width="2.500" height="3" opacity="0.500"/></g></svg>
<svg style="left:822px;top:521.5px;" width="15" height="15" viewBox="0 0 15 15" fill="none" stroke="#b9b9b9" stroke-width="1"><path d="M0.800 0.800 L10 0.800 L10 6 M0.800 0.800 L0.800 10 L5 10" stroke="#777777" stroke-width="1.500"/><circle cx="6" cy="6" r="3.300" stroke="#777777" stroke-width="1.600"/><path d="M9 9.500 L14 14.500 M14 9.500 L9 14.500" stroke="#777777" stroke-width="1.300"/></svg>
<svg style="left:859px;top:521.5px;" width="15" height="15" viewBox="0 0 15 15" fill="none" stroke="#b9b9b9" stroke-width="1"><path d="M0.800 0.800 L11 0.800 L0.800 11 Z" fill="#777777" stroke="#777777" stroke-width="1"/><path d="M9 9.500 L14 14.500 M14 9.500 L9 14.500" stroke="#777777" stroke-width="1.300"/></svg>
<svg style="left:689px;top:545px;" width="15" height="14" viewBox="0 0 15 14" fill="none" stroke="#b9b9b9" stroke-width="1"><rect x="0.600" y="0.600" width="13.300" height="12.300" rx="1.500" stroke="#c0c0c0" stroke-width="1.200"/><path d="M0.600 6.800 L14 6.800 M3 3.700 L5 3.700 M3 9.900 L5 9.900" stroke="#c0c0c0" stroke-width="1.200"/></svg>
<svg style="left:769px;top:544.5px;" width="17" height="16" viewBox="0 0 17 16" fill="none" stroke="#b9b9b9" stroke-width="1"><path d="M10 12.500 L3.500 12.500 L0.700 9.700 L0.700 2.200 Q0.700 0.700 2.200 0.700 L11.300 0.700 Q12.800 0.700 12.800 2.200 L12.800 8" stroke="#c0c0c0" stroke-width="1.300"/><path d="M0.700 9.500 L3.700 9.500 L3.700 12.500" stroke="#c0c0c0" stroke-width="1"/><circle cx="12.5" cy="12" r="3.600" fill="#c0c0c0" stroke="#4d4d4d" stroke-width="0.800"/><path d="M10.3 12 L14.7 12 M12.5 9.8 L12.5 14.2" stroke="#404040" stroke-width="1.100"/></svg>
<svg style="left:789px;top:544.5px;" width="17" height="16" viewBox="0 0 17 16" fill="none" stroke="#b9b9b9" stroke-width="1"><path d="M10 12.500 L3.500 12.500 L0.700 9.700 L0.700 2.200 Q0.700 0.700 2.200 0.700 L11.300 0.700 Q12.800 0.700 12.800 2.200 L12.800 8" stroke="#c0c0c0" stroke-width="1.300"/><circle cx="6.800" cy="6.300" r="3.800" stroke="#c0c0c0" stroke-width="1"/><path d="M6.800 2.500 L6.800 6.300 L3.500 8.300 M6.800 6.300 L10 8.300" stroke="#c0c0c0" stroke-width="0.900"/><circle cx="12.5" cy="12" r="3.600" fill="#c0c0c0" stroke="#4d4d4d" stroke-width="0.800"/><path d="M10.3 12 L14.7 12 M12.5 9.8 L12.5 14.2" stroke="#404040" stroke-width="1.100"/></svg>
<svg style="left:808.5px;top:544.5px;" width="17" height="16" viewBox="0 0 17 16" fill="none" stroke="#b9b9b9" stroke-width="1"><path d="M0.500 11.500 L0.500 1.500 Q0.500 0.500 1.500 0.500 L5.500 0.500 L7 2.500 L13.500 2.500 Q14.500 2.500 14.500 3.500 L14.500 8 L10 12.500 L1.500 12.500 Q0.500 12.500 0.500 11.500Z" fill="#c0c0c0" stroke="none"/><circle cx="12.8" cy="12.2" r="3.600" fill="#c0c0c0" stroke="#4d4d4d" stroke-width="0.800"/><path d="M10.600000000000001 12.2 L15.0 12.2 M12.8 10.0 L12.8 14.399999999999999" stroke="#404040" stroke-width="1.100"/></svg>
<svg style="left:828px;top:544.5px;" width="17" height="16" viewBox="0 0 17 16" fill="none" stroke="#b9b9b9" stroke-width="1"><rect x="5.500" y="0.700" width="10" height="9.500" stroke="#777777" stroke-width="1.200"/><rect x="8.500" y="3" width="4.500" height="4.500" fill="#777777" stroke="none"/><rect x="0.700" y="5.500" width="9.500" height="9.500" fill="#4d4d4d" stroke="#777777" stroke-width="1.200"/><path d="M7.500 8.500 L7.500 11.500 L3 11.500 M5 9.500 L3 11.500 L5 13.500" stroke="#777777" stroke-width="1"/></svg>
<svg style="left:847.5px;top:544.5px;" width="17" height="16" viewBox="0 0 17 16" fill="none" stroke="#b9b9b9" stroke-width="1"><rect x="5.500" y="0.700" width="10" height="9.500" stroke="#c0c0c0" stroke-width="1.300"/><rect x="0.700" y="5.500" width="9.500" height="9.500" fill="#4d4d4d" stroke="#c0c0c0" stroke-width="1.300"/><path d="M7.500 8.500 L7.500 11.500 L3 11.500 M5 9.500 L3 11.500 L5 13.500" stroke="#c0c0c0" stroke-width="1.100"/></svg>
<svg style="left:869.5px;top:545px;" width="14" height="14" viewBox="0 0 14 14" fill="none" stroke="#b9b9b9" stroke-width="1"><rect x="0" y="0" width="13.500" height="14" rx="2" fill="#c0c0c0" stroke="none"/><circle cx="6.750" cy="7" r="3.600" fill="#3a3a3a" stroke="none"/></svg>
<svg style="left:888.5px;top:545.5px;" width="17" height="14" viewBox="0 0 17 14" fill="none" stroke="#b9b9b9" stroke-width="1"><rect x="0.600" y="0.600" width="9" height="9" stroke="#777777" stroke-width="1.100"/><path d="M5 3 L3 5 L5 7 M3 5 L8 5" stroke="#777777" stroke-width="1"/><path d="M6 5.500 L8 5.500 L9 4 L13 4 L14 5.500 L16 5.500 L16 13 L6 13 Z" fill="#777777" stroke="none"/><circle cx="11" cy="9" r="2.300" fill="#4d4d4d" stroke="none"/></svg>
<svg style="left:910.5px;top:544.5px;" width="12" height="15" viewBox="0 0 12 15" fill="none" stroke="#b9b9b9" stroke-width="1"><path d="M0.500 3.200 L11.500 3.200 M4 3 L4.300 1 L7.700 1 L8 3" stroke="#c0c0c0" stroke-width="1.100"/><path d="M1.800 3.500 L2.300 13 Q2.400 14.300 3.700 14.300 L8.300 14.300 Q9.600 14.300 9.700 13 L10.200 3.500" stroke="#c0c0c0" stroke-width="1.100"/><path d="M4.300 5.500 L4.300 12 M6 5.500 L6 12 M7.700 5.500 L7.700 12" stroke="#c0c0c0" stroke-width="0.900"/></svg>
<div style="left:686px;top:565px;width:240.5px;height:31.5px;background:#444;"></div>
<div style="left:686px;top:565px;width:20px;height:31.5px;background:#484848;"></div>
<div style="left:707px;top:565px;width:17px;height:31.5px;background:#484848;"></div>
<div style="left:725px;top:565px;width:187.5px;height:31.5px;background:#5b6580;"></div>
<svg style="left:688.3px;top:575px;" width="15" height="10" viewBox="0 0 15 10" fill="none" stroke="#b9b9b9" stroke-width="1"><path d="M0.800 6 Q7 -2.500 14.200 6" stroke="#d0d0d0" stroke-width="1.300"/><circle cx="7.500" cy="5.500" r="2.800" fill="#d0d0d0" stroke="none"/></svg>
<svg style="left:707.5px;top:572px;" width="14" height="15" viewBox="0 0 14 15" fill="none" stroke="#b9b9b9" stroke-width="1"><path d="M2.500 10.500 L3.300 8 L10 1.200 L12.300 3.500 L5.500 10.300 Z" fill="#d0d0d0" stroke="none"/><path d="M1 13.500 L13.500 13.500" stroke="#d0d0d0" stroke-width="1"/></svg>
<div style="left:729.3px;top:565.5px;width:37.2px;height:30.5px;background:repeating-conic-gradient(#fff 0 25%,#d0d0d0 0 50%) 2px 2px/8.400px 8.400px;border:1px solid #dfe4f4;box-sizing:border-box;outline:1.200px solid #1c1c1c;outline-offset:-2.200px;"></div>
<div class="t" style="left:773px;top:569px;font-size:12px;color:#f0f0f0"><span class="m">100 %</span>正常</div>
<div class="t" style="left:773px;top:583px;font-size:12px;color:#f0f0f0;word-spacing:2.500px">图层 <span class="m">1</span></div>
<div style="left:914.5px;top:566px;width:11px;height:11px;background:#525252;border-radius:2px;"></div>
<svg style="left:917.0px;top:569.5px;" width="7" height="5" viewBox="0 0 7 5" fill="none" stroke="#b9b9b9" stroke-width="1"><path d="M0.500 4.200 L3.500 0.900 L6.500 4.200" stroke="#c8c8c8" stroke-width="1.150"/></svg>
<div style="left:914.5px;top:584px;width:11px;height:11px;background:#525252;border-radius:2px;"></div>
<svg style="left:917.0px;top:587.5px;" width="7" height="5" viewBox="0 0 7 5" fill="none" stroke="#b9b9b9" stroke-width="1"><path d="M0.500 0.800 L3.500 4.100 L6.500 0.800" stroke="#c8c8c8" stroke-width="1.150"/></svg>
<div style="left:307px;top:133.7px;width:217.5px;height:161.8px;background:#3c3c3c;box-shadow:1px 1px 3px rgba(0,0,0,.5);"></div>
<div style="left:316px;top:140.0px;width:9px;height:1px;background:#5e5e5e;"></div>
<div style="left:316px;top:143.3px;width:9px;height:1px;background:#5e5e5e;"></div>
<div style="left:316px;top:146.6px;width:9px;height:1px;background:#5e5e5e;"></div>
<div style="left:312.5px;top:153px;width:206.5px;height:138.3px;background:#4d4d4d;"></div>
<div style="left:312.5px;top:153px;width:206.5px;height:81.5px;background:repeating-conic-gradient(#cccccc 0 25%,#fff 0 50%) 0.300px 0.300px/16px 16px;"></div>
<div style="left:493px;top:146.5px;width:9px;height:1.2px;background:#c8c8c8;"></div>
<svg style="left:507.5px;top:138.5px;" width="9" height="9" viewBox="0 0 9 9" fill="none" stroke="#b9b9b9" stroke-width="1"><path d="M0.800 0.800 L8 8 M8 0.800 L0.800 8" stroke="#d0d0d0" stroke-width="1"/></svg>
<div style="left:316.5px;top:240px;width:24.5px;height:14px;background:#f02c3c;border-radius:3px;box-shadow:0 0 0 1px #3a3a3a;"></div>
<div style="left:348px;top:240px;width:24.5px;height:14px;background:#f79a2c;border-radius:3px;box-shadow:0 0 0 1px #3a3a3a;"></div>
<div style="left:444px;top:240px;width:25px;height:14px;background:#0a6a80;border-radius:3px;box-shadow:0 0 0 1px #3a3a3a;"></div>
<div style="left:476px;top:240px;width:24.7px;height:14px;background:#2c6cf0;border-radius:3px;box-shadow:0 0 0 1px #3a3a3a;"></div>
<div style="left:508.3px;top:240px;width:10.7px;height:14px;background:#22ccf4;border-radius:3px;box-shadow:0 0 0 1px #3a3a3a;"></div>
<div style="left:314px;top:258.5px;width:205px;height:11.5px;background:#444;"></div>
<div style="left:314px;top:258.5px;width:10.3px;height:11.5px;background:#5a5a5a;border-radius:2px;"></div>
<svg style="left:316.5px;top:260.5px;" width="5" height="8" viewBox="0 0 5 8" fill="none" stroke="#b9b9b9" stroke-width="1"><path d="M4.200 0.800 L1 4 L4.200 7.200" stroke="#d8d8d8" stroke-width="1.200"/></svg>
<div style="left:326px;top:259.5px;width:190px;height:9.5px;background:#585858;border-radius:5px;"></div>
<div style="left:315px;top:274.5px;width:13.7px;height:13.5px;background:#000;border-radius:2px;box-shadow:0 0 0 1px #3a3a3a;"></div>
<svg style="left:348.3px;top:273.3px;" width="16" height="16" viewBox="0 0 16 16" fill="none" stroke="#b9b9b9" stroke-width="1"><g stroke="#a8a8a8" stroke-width="1"><path d="M12.30 8.00 L15.00 8.00"/><path d="M11.72 10.15 L14.06 11.50"/><path d="M10.15 11.72 L11.50 14.06"/><path d="M8.00 12.30 L8.00 15.00"/><path d="M5.85 11.72 L4.50 14.06"/><path d="M4.28 10.15 L1.94 11.50"/><path d="M3.70 8.00 L1.00 8.00"/><path d="M4.28 5.85 L1.94 4.50"/><path d="M5.85 4.28 L4.50 1.94"/><path d="M8.00 3.70 L8.00 1.00"/><path d="M10.15 4.28 L11.50 1.94"/><path d="M11.72 5.85 L14.06 4.50"/></g></svg>
<div style="left:376px;top:98px;width:80px;height:200px;background:#3c3c3c;box-shadow:1px 1px 3px rgba(0,0,0,.5), inset 1px 1px 0 #484848;"></div>
<div style="left:381px;top:116px;width:70px;height:182px;background:#4f4f4f;"></div>
<div style="left:385px;top:104px;width:9px;height:1px;background:#6a6a6a;"></div>
<div style="left:385px;top:107px;width:9px;height:1px;background:#6a6a6a;"></div>
<div style="left:385px;top:110px;width:9px;height:1px;background:#6a6a6a;"></div>
<div class="t" style="left:397.3px;top:104.3px;font-size:9.3px;color:#c0c0c0;">工具</div>
<div style="left:424.3px;top:109.7px;width:8.5px;height:1.2px;background:#c8c8c8;"></div>
<svg style="left:439.3px;top:103.5px;" width="8" height="8" viewBox="0 0 8 8" fill="none" stroke="#b9b9b9" stroke-width="1"><path d="M0.600 0.600 L7.400 7.400 M7.400 0.600 L0.600 7.400" stroke="#d0d0d0" stroke-width="1"/></svg>
<div style="left:384px;top:118.8px;width:28px;height:28px;background:#333;border-radius:50%;"></div>
<div style="left:418.8px;top:118.8px;width:28px;height:28px;background:#000;border-radius:50%;"></div>
<div class="t m" style="left:384px;top:121.800px;width:28px;text-align:center;font-size:12px;color:#fff">10<i>.</i>0</div>
<div class="t s" style="left:384px;top:133.500px;width:28px;text-align:center;font-size:11.500px;color:#fff">px</div>
<div class="t m" style="left:418.800px;top:121.800px;width:28px;text-align:center;font-size:12px;color:#fff">100</div>
<div class="t s" style="left:418.800px;top:134px;width:28px;text-align:center;font-size:10.500px;color:#fff">%</div>
<div style="left:396px;top:162px;width:3.5px;height:100px;background:#383838;border-radius:2px;"></div>
<div style="left:430px;top:162px;width:6px;height:100px;background:linear-gradient(to bottom,rgba(0,0,0,1) 10%,rgba(0,0,0,.0) 100%),repeating-conic-gradient(#2c2c2c 0 25%,#a0a0a0 0 50%) 0 0/6px 6px;"></div>
<div style="left:387.8px;top:230px;width:20px;height:20px;background:#aaa;border-radius:50%;"></div>
<div style="left:422.8px;top:152px;width:20px;height:20px;background:#aaa;border-radius:50%;"></div>
<div style="left:394.5px;top:248px;width:6.5px;height:10px;background:#aaa;"></div>
<div style="left:364px;top:254.3px;width:210px;height:244.3px;background:#3c3c3c;box-shadow:2px 3px 4px rgba(0,0,0,.45), inset 1px 1px 0 #464646;"></div>
<div style="left:368.7px;top:272px;width:200.3px;height:222px;background:#404040;"></div>
<div style="left:373.3px;top:259.7px;width:9.3px;height:1px;background:#565656;"></div>
<div style="left:373.3px;top:262.7px;width:9.3px;height:1px;background:#565656;"></div>
<div style="left:373.3px;top:265.7px;width:9.3px;height:1px;background:#565656;"></div>
<div class="t" style="left:449px;top:259.3px;font-size:9.3px;color:#a4a4a4;">排列/分布</div>
<div style="left:542px;top:265.5px;width:9px;height:1.2px;background:#c8c8c8;"></div>
<svg style="left:557.3px;top:258.8px;" width="9" height="9" viewBox="0 0 9 9" fill="none" stroke="#b9b9b9" stroke-width="1"><path d="M0.800 0.800 L8 8 M8 0.800 L0.800 8" stroke="#d0d0d0" stroke-width="1"/></svg>
<div class="t" style="left:375px;top:278px;font-size:12px;color:#f0f0f0;">排列基准</div>
<div style="left:431px;top:273px;width:120.3px;height:20px;background:#555;border:1px solid #6c6c6c;box-sizing:border-box;border-radius:2.500px;"></div>
<div style="left:515.3px;top:273.8px;width:21.5px;height:18.5px;background:#7b8cc4;"></div>
<svg style="left:431px;top:273px;" width="120" height="20" viewBox="0 0 120 20" fill="none" stroke="#b9b9b9" stroke-width="1"><rect x="3" y="11" width="7" height="5" fill="#c4c4c4" stroke="none"/><rect x="9.5" y="3.5" width="5" height="5" fill="#c4c4c4" stroke="none"/><rect x="13" y="10" width="4" height="4" fill="#c4c4c4" stroke="none"/><rect x="25" y="2" width="1.2" height="16" fill="#c4c4c4" stroke="none"/><rect x="36" y="2" width="1.2" height="16" fill="#c4c4c4" stroke="none"/><rect x="23" y="3.5" width="16" height="1.2" fill="#c4c4c4" stroke="none"/><rect x="23" y="15.5" width="16" height="1.2" fill="#c4c4c4" stroke="none"/><rect x="31" y="5" width="4" height="4" fill="#c4c4c4" stroke="none"/><rect x="28" y="10" width="5" height="4" fill="#c4c4c4" stroke="none"/><rect x="52" y="5.5" width="4" height="3.5" fill="#c4c4c4" stroke="none"/><rect x="48.5" y="10.5" width="5.5" height="3.5" fill="#c4c4c4" stroke="none"/><rect x="68" y="2" width="1.2" height="15" fill="#c4c4c4" stroke="none"/><rect x="66" y="5" width="15" height="1.2" fill="#c4c4c4" stroke="none"/><rect x="72" y="7" width="7" height="3" fill="#c4c4c4" stroke="none"/><rect x="70" y="12" width="8" height="4" fill="#c4c4c4" stroke="none"/></svg>
<svg style="left:476px;top:276px;" width="15" height="15" viewBox="0 0 15 15" fill="none" stroke="#b9b9b9" stroke-width="1"><rect x="0.600" y="0.600" width="13.300" height="13.300" rx="2.500" stroke="#c4c4c4" stroke-width="1.100" stroke-dasharray="2.400 1.400"/></svg>
<svg style="left:515.3px;top:273.8px;" width="120" height="20" viewBox="0 0 120 20" fill="none" stroke="#b9b9b9" stroke-width="1"><rect x="3.7" y="2.7" width="5.5" height="4.5" fill="#c9cde0" stroke="none"/><rect x="10" y="4.2" width="6" height="1" fill="#c9cde0" stroke="none"/><rect x="10" y="6.7" width="4.5" height="1" fill="#c9cde0" stroke="none"/><rect x="3.7" y="10.7" width="8" height="4.5" fill="#c9cde0" stroke="none"/><rect x="12.7" y="10.7" width="5" height="1" fill="#c9cde0" stroke="none"/><rect x="12.7" y="13.2" width="3.5" height="1" fill="#c9cde0" stroke="none"/></svg>
<svg style="left:539px;top:280.7px;" width="9" height="6" viewBox="0 0 9 6" fill="none" stroke="#b9b9b9" stroke-width="1"><path d="M0.500 0.700 L4.500 4.700 L8.500 0.700" stroke="#c8c8c8" stroke-width="1.100"/></svg>
<div class="t" style="left:461.4px;top:298.3px;font-size:12px;color:#f0f0f0;word-spacing:4.300px;">自动 : 排列对象</div>
<div class="t" style="left:375px;top:321px;font-size:12px;color:#f0f0f0;">排列</div>
<div class="t" style="left:375px;top:366px;font-size:12px;color:#f0f0f0;">分布</div>
<div class="t" style="left:375px;top:410.7px;font-size:12px;color:#f0f0f0;">均匀分布</div>
<div style="left:378.2px;top:334px;width:25.7px;height:23.6px;background:#555;border:1px solid #6c6c6c;box-sizing:border-box;border-radius:2.500px;"></div>
<div style="left:378.2px;top:379.4px;width:25.7px;height:23.2px;background:#555;border:1px solid #6c6c6c;box-sizing:border-box;border-radius:2.500px;"></div>
<div style="left:406px;top:334px;width:25.7px;height:23.6px;background:#555;border:1px solid #6c6c6c;box-sizing:border-box;border-radius:2.500px;"></div>
<div style="left:406px;top:379.4px;width:25.7px;height:23.2px;background:#555;border:1px solid #6c6c6c;box-sizing:border-box;border-radius:2.500px;"></div>
<div style="left:434px;top:334px;width:25.7px;height:23.6px;background:#555;border:1px solid #6c6c6c;box-sizing:border-box;border-radius:2.500px;"></div>
<div style="left:434px;top:379.4px;width:25.7px;height:23.2px;background:#555;border:1px solid #6c6c6c;box-sizing:border-box;border-radius:2.500px;"></div>
<div style="left:469.3px;top:334px;width:25.7px;height:23.6px;background:#555;border:1px solid #6c6c6c;box-sizing:border-box;border-radius:2.500px;"></div>
<div style="left:469.3px;top:379.4px;width:25.7px;height:23.2px;background:#555;border:1px solid #6c6c6c;box-sizing:border-box;border-radius:2.500px;"></div>
<div style="left:497.3px;top:334px;width:25.7px;height:23.6px;background:#555;border:1px solid #6c6c6c;box-sizing:border-box;border-radius:2.500px;"></div>
<div style="left:497.3px;top:379.4px;width:25.7px;height:23.2px;background:#555;border:1px solid #6c6c6c;box-sizing:border-box;border-radius:2.500px;"></div>
<div style="left:525.3px;top:334px;width:25.7px;height:23.6px;background:#555;border:1px solid #6c6c6c;box-sizing:border-box;border-radius:2.500px;"></div>
<div style="left:525.3px;top:379.4px;width:25.7px;height:23.2px;background:#555;border:1px solid #6c6c6c;box-sizing:border-box;border-radius:2.500px;"></div>
<div style="left:464px;top:335px;width:1px;height:22px;background:#6a6a6a;"></div>
<div style="left:464px;top:380px;width:1px;height:22px;background:#6a6a6a;"></div>
<svg style="left:378.2px;top:334px;" width="120" height="20" viewBox="0 0 120 20" fill="none" stroke="#b9b9b9" stroke-width="1"><rect x="6.5" y="5.5" width="1.2" height="13" fill="#c4c4c4" stroke="none"/><rect x="7.5" y="7" width="7" height="3.5" fill="#c4c4c4" stroke="none"/><rect x="7.5" y="13" width="10" height="4" fill="#c4c4c4" stroke="none"/></svg>
<svg style="left:406px;top:334px;" width="120" height="20" viewBox="0 0 120 20" fill="none" stroke="#b9b9b9" stroke-width="1"><rect x="12.3" y="5" width="1.2" height="14" fill="#c4c4c4" stroke="none"/><rect x="8.5" y="7" width="9" height="3.5" fill="#c4c4c4" stroke="none"/><rect x="6.5" y="13" width="13" height="4" fill="#c4c4c4" stroke="none"/></svg>
<svg style="left:434px;top:334px;" width="120" height="20" viewBox="0 0 120 20" fill="none" stroke="#b9b9b9" stroke-width="1"><rect x="17.8" y="5.5" width="1.2" height="13" fill="#c4c4c4" stroke="none"/><rect x="10" y="7" width="8" height="3.5" fill="#c4c4c4" stroke="none"/><rect x="7" y="13" width="11" height="4" fill="#c4c4c4" stroke="none"/></svg>
<svg style="left:469.3px;top:334px;" width="120" height="20" viewBox="0 0 120 20" fill="none" stroke="#b9b9b9" stroke-width="1"><rect x="5.5" y="6" width="14.5" height="1.2" fill="#c4c4c4" stroke="none"/><rect x="8" y="7" width="4.5" height="10" fill="#c4c4c4" stroke="none"/><rect x="14" y="7" width="4" height="7" fill="#c4c4c4" stroke="none"/></svg>
<svg style="left:497.3px;top:334px;" width="120" height="20" viewBox="0 0 120 20" fill="none" stroke="#b9b9b9" stroke-width="1"><rect x="5.5" y="11.2" width="14.5" height="1.2" fill="#c4c4c4" stroke="none"/><rect x="8.2" y="6" width="4" height="11" fill="#c4c4c4" stroke="none"/><rect x="14.2" y="8" width="3.5" height="7" fill="#c4c4c4" stroke="none"/></svg>
<svg style="left:525.3px;top:334px;" width="120" height="20" viewBox="0 0 120 20" fill="none" stroke="#b9b9b9" stroke-width="1"><rect x="5.5" y="16.2" width="14.5" height="1.2" fill="#c4c4c4" stroke="none"/><rect x="7.8" y="6" width="4.5" height="10.5" fill="#c4c4c4" stroke="none"/><rect x="14.2" y="9.5" width="3.5" height="7" fill="#c4c4c4" stroke="none"/></svg>
<svg style="left:378.2px;top:379.4px;" width="120" height="20" viewBox="0 0 120 20" fill="none" stroke="#b9b9b9" stroke-width="1"><rect x="5.5" y="5" width="15" height="1.2" fill="#c4c4c4" stroke="none"/><rect x="9" y="6" width="8" height="3" fill="#c4c4c4" stroke="none"/><rect x="5.5" y="11.5" width="15" height="1.2" fill="#c4c4c4" stroke="none"/><rect x="7" y="12.5" width="12" height="4.5" fill="#c4c4c4" stroke="none"/></svg>
<svg style="left:406px;top:379.4px;" width="120" height="20" viewBox="0 0 120 20" fill="none" stroke="#b9b9b9" stroke-width="1"><rect x="5.5" y="7.5" width="15" height="1.2" fill="#c4c4c4" stroke="none"/><rect x="9" y="6" width="8" height="4" fill="#c4c4c4" stroke="none"/><rect x="5.5" y="14.2" width="15" height="1.2" fill="#c4c4c4" stroke="none"/><rect x="7" y="12" width="12" height="5.5" fill="#c4c4c4" stroke="none"/></svg>
<svg style="left:434px;top:379.4px;" width="120" height="20" viewBox="0 0 120 20" fill="none" stroke="#b9b9b9" stroke-width="1"><rect x="5.5" y="9.8" width="15" height="1.2" fill="#c4c4c4" stroke="none"/><rect x="9" y="6" width="8" height="4" fill="#c4c4c4" stroke="none"/><rect x="5.5" y="17" width="15" height="1.2" fill="#c4c4c4" stroke="none"/><rect x="7" y="12" width="12" height="5" fill="#c4c4c4" stroke="none"/></svg>
<svg style="left:469.3px;top:379.4px;" width="120" height="20" viewBox="0 0 120 20" fill="none" stroke="#b9b9b9" stroke-width="1"><rect x="7" y="4.5" width="1.2" height="15" fill="#c4c4c4" stroke="none"/><rect x="8" y="7" width="3.5" height="9" fill="#c4c4c4" stroke="none"/><rect x="14" y="4.5" width="1.2" height="15" fill="#c4c4c4" stroke="none"/><rect x="15" y="8.5" width="4.5" height="6" fill="#c4c4c4" stroke="none"/></svg>
<svg style="left:497.3px;top:379.4px;" width="120" height="20" viewBox="0 0 120 20" fill="none" stroke="#b9b9b9" stroke-width="1"><rect x="9" y="4.5" width="1.2" height="15" fill="#c4c4c4" stroke="none"/><rect x="7.5" y="7" width="4.5" height="9" fill="#c4c4c4" stroke="none"/><rect x="16" y="4.5" width="1.2" height="15" fill="#c4c4c4" stroke="none"/><rect x="14.5" y="8.5" width="4.5" height="6" fill="#c4c4c4" stroke="none"/></svg>
<svg style="left:525.3px;top:379.4px;" width="120" height="20" viewBox="0 0 120 20" fill="none" stroke="#b9b9b9" stroke-width="1"><rect x="11.5" y="4.5" width="1.2" height="15" fill="#c4c4c4" stroke="none"/><rect x="7" y="7" width="4.5" height="9" fill="#c4c4c4" stroke="none"/><rect x="18.5" y="4.5" width="1.2" height="15" fill="#c4c4c4" stroke="none"/><rect x="14.5" y="8.5" width="4" height="6" fill="#c4c4c4" stroke="none"/></svg>
<div style="left:375px;top:424.4px;width:87px;height:23px;background:#555;border:1px solid #6c6c6c;box-sizing:border-box;border-radius:2.500px;"></div>
<div style="left:464px;top:424.4px;width:87px;height:23px;background:#555;border:1px solid #6c6c6c;box-sizing:border-box;border-radius:2.500px;"></div>
<svg style="left:375px;top:424.4px;" width="120" height="20" viewBox="0 0 120 20" fill="none" stroke="#b9b9b9" stroke-width="1"><rect x="38.2" y="6.5" width="3.5" height="1" fill="#c4c4c4" stroke="none"/><rect x="38.2" y="16" width="3.5" height="1" fill="#c4c4c4" stroke="none"/><rect x="39.5" y="6.5" width="1" height="10.5" fill="#c4c4c4" stroke="none"/><rect x="43" y="6.5" width="7.5" height="4.5" fill="#c4c4c4" stroke="none"/><rect x="43" y="12.5" width="5.5" height="4.5" fill="#c4c4c4" stroke="none"/></svg>
<svg style="left:464px;top:424.4px;" width="120" height="20" viewBox="0 0 120 20" fill="none" stroke="#b9b9b9" stroke-width="1"><rect x="38" y="6" width="9.5" height="1" fill="#c4c4c4" stroke="none"/><rect x="38" y="4.5" width="1" height="3.5" fill="#c4c4c4" stroke="none"/><rect x="46.5" y="4.5" width="1" height="3.5" fill="#c4c4c4" stroke="none"/><rect x="38" y="9.5" width="3.5" height="7.5" fill="#c4c4c4" stroke="none"/><rect x="43.5" y="9" width="5.5" height="10" fill="#c4c4c4" stroke="none"/></svg>
<div style="left:375px;top:453px;width:16px;height:16px;background:#555;border:1px solid #727272;box-sizing:border-box;border-radius:2.500px;"></div>
<div style="left:375px;top:474px;width:16px;height:16px;background:#555;border:1px solid #727272;box-sizing:border-box;border-radius:2.500px;"></div>
<svg style="left:375px;top:453px;" width="16" height="16" viewBox="0 0 16 16" fill="none" stroke="#b9b9b9" stroke-width="1"><path d="M3.500 8.200 L6.800 12 L12.500 3.500" stroke="#fff" stroke-width="1.500"/></svg>
<div class="t" style="left:395px;top:455.6px;font-size:12px;color:#f0f0f0;">排列文本的描画边界</div>
<div class="t" style="left:395px;top:476.6px;font-size:12px;color:#f0f0f0;">排列矢量中心线</div>
<div style="left:556px;top:273px;width:12px;height:220.5px;background:#444;"></div>
<div style="left:556px;top:273.3px;width:12px;height:11.3px;background:#525252;border-radius:2px;"></div>
<svg style="left:558.5px;top:276.8px;" width="7" height="5" viewBox="0 0 7 5" fill="none" stroke="#b9b9b9" stroke-width="1"><path d="M0.500 4.200 L3.500 0.900 L6.500 4.200" stroke="#c8c8c8" stroke-width="1.150"/></svg>
<div style="left:556px;top:481.3px;width:12px;height:11.5px;background:#525252;border-radius:2px;"></div>
<svg style="left:558.5px;top:484.8px;" width="7" height="5" viewBox="0 0 7 5" fill="none" stroke="#b9b9b9" stroke-width="1"><path d="M0.500 0.800 L3.500 4.100 L6.500 0.800" stroke="#c8c8c8" stroke-width="1.150"/></svg>
<div style="left:557px;top:286.5px;width:10.3px;height:191.5px;background:#555;border-radius:5px;"></div>
</body></html>
